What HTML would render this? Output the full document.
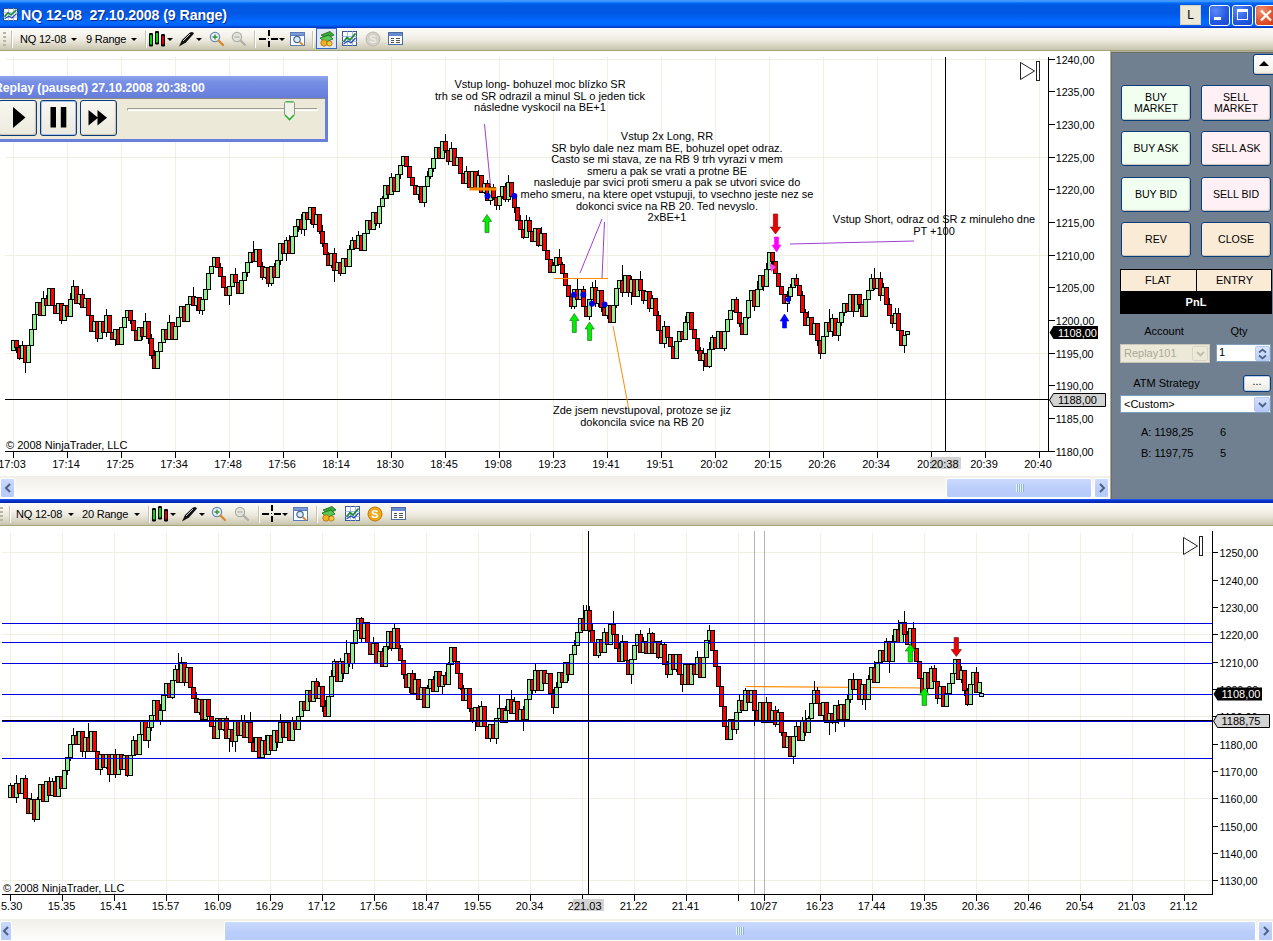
<!DOCTYPE html><html><head><meta charset="utf-8"><title>NQ 12-08</title><style>

html,body{margin:0;padding:0;background:#fff;}
body{width:1273px;height:941px;position:relative;overflow:hidden;font-family:"Liberation Sans",sans-serif;font-size:11px;color:#000;}
.abs{position:absolute;}
#title{left:0;top:0;width:1273px;height:28px;background:linear-gradient(#409aff 0%,#3b94ff 6%,#006dfb 10%,#0059e2 18%,#0058e4 50%,#0062f6 65%,#006aff 76%,#0067fd 89%,#0050e2 94%,#002ec2 100%);}
#title .t{left:21px;top:6.5px;color:#fff;font-weight:bold;font-size:14.2px;letter-spacing:-0.1px;white-space:pre;text-shadow:1px 1px 0 #0a2a8a;}
.tb{left:0;width:1273px;height:22px;background:linear-gradient(#fcfbf7 0%,#f4f2ea 35%,#e9e6da 60%,#d4d1bd 85%,#c6c4ab 100%);border-bottom:1px solid #a5a57d;}
.tb span{position:absolute;white-space:pre;font-size:11px;top:5px;letter-spacing:-0.2px;}
.sep{position:absolute;width:1px;top:3px;height:17px;background:#c5c2b2;border-right:1px solid #fff;}
.dd{position:absolute;top:10px;width:0;height:0;border-left:3px solid transparent;border-right:3px solid transparent;border-top:3px solid #000;}
#panel{left:1110px;top:51px;width:163px;height:448px;border-left:1px solid #b0ae9a;border-top:1px solid #b0ae9a;box-shadow:inset 1px 1px 0 #6e6e64;box-sizing:border-box;background:#708090;}
.btn{position:absolute;border:1px solid #0a3c7a;border-radius:3px;box-sizing:border-box;text-align:center;font-size:10.6px;line-height:11px;box-shadow:inset -1px -1px 1px #c8c4b8;}
.lbl{position:absolute;white-space:pre;font-size:11px;}
.sb{left:0;height:22px;background:linear-gradient(#f1efe8,#fefefc);}
.sbt{position:absolute;top:2px;height:20px;border-radius:2px;background:linear-gradient(#cbdafd,#bccffb 50%,#b7cbf9);border:1px solid #fff;box-sizing:border-box;}

</style></head><body>
<div class="abs" id="title">
<svg class="abs" style="left:3px;top:8px" width="15" height="13" viewBox="0 0 15 15" preserveAspectRatio="none"><rect x="0.5" y="0.5" width="14" height="14" fill="#fff" stroke="#24448a"/><path d="M0.5 5.5H14.5M0.5 10.5H14.5M5.5 0.5V14.5M10.5 0.5V14.5" stroke="#a8c0e8"/><path d="M1.5 10L5 5.5L8 8L13.5 2" stroke="#1a8a3a" stroke-width="1.8" fill="none"/><path d="M1.5 12.5L6 9.5L9 11.5L13.5 6.5" stroke="#2a4ab8" stroke-width="1.2" fill="none"/></svg>
<div class="abs t">NQ 12-08  27.10.2008 (9 Range)</div>
<div class="abs" style="left:1180px;top:5px;width:21px;height:20px;background:#ece9d8;border:1px solid #d8d2bd;box-sizing:border-box;text-align:center;font-size:12px;line-height:18px">L</div>
<div class="abs" style="left:1209px;top:5px;width:21px;height:21px;border:1px solid #fff;border-radius:3px;box-sizing:border-box;background:radial-gradient(circle at 30% 25%,#5a8af8,#2456e0 60%,#1a48c8)"></div>
<div class="abs" style="left:1232px;top:5px;width:21px;height:21px;border:1px solid #fff;border-radius:3px;box-sizing:border-box;background:radial-gradient(circle at 30% 25%,#5a8af8,#2456e0 60%,#1a48c8)"></div>
<div class="abs" style="left:1255px;top:5px;width:21px;height:21px;border:1px solid #fff;border-radius:3px;box-sizing:border-box;background:radial-gradient(circle at 30% 25%,#f09070,#e0502a 60%,#c83a18)"></div>
<div class="abs" style="left:1214px;top:17px;width:7px;height:3px;background:#fff"></div>
<div class="abs" style="left:1237px;top:9px;width:11px;height:11px;border:1px solid #fff;border-top:3px solid #fff;box-sizing:border-box"></div>
<svg class="abs" style="left:1259px;top:9px" width="14" height="13"><path d="M2 1.5L12 11.5M12 1.5L2 11.5" stroke="#fff" stroke-width="2.2"/></svg>
</div>
<div class="abs tb" style="top:28px">
<div class="abs" style="left:3px;top:4px;width:3px;height:15px;background:repeating-linear-gradient(#b8b5a2 0 2px,transparent 2px 4px)"></div>
<div class="sep" style="left:11px"></div>
<span style="left:20px">NQ 12-08</span><div class="dd" style="left:71px"></div>
<span style="left:86px">9 Range</span><div class="dd" style="left:131px"></div>
<div class="sep" style="left:145px"></div>
<svg class="abs" style="left:148px;top:1px" width="22" height="20" viewBox="0 0 22 20">
<rect x="1" y="4" width="4" height="13.5" rx="1.3" fill="#000"/><rect x="2.1" y="6" width="1.8" height="9.5" fill="#00f000"/>
<rect x="7" y="2" width="4" height="13.5" rx="1.3" fill="#000"/><rect x="8.1" y="4" width="1.8" height="9.5" fill="#00f000"/>
<rect x="13" y="5" width="4" height="12.5" rx="1.3" fill="#000"/><rect x="14.1" y="7" width="1.8" height="8.5" fill="#f00000"/></svg>
<div class="dd" style="left:167px"></div>
<svg class="abs" style="left:178px;top:2px" width="18" height="18" viewBox="0 0 18 18">
<path d="M1 16.5L4 10L12 2.5Q15 1 16 3.5L8 12.5Z" fill="#111"/><path d="M5 11L12 4" stroke="#fff" stroke-width="0.8"/></svg>
<div class="dd" style="left:196px"></div>
<svg class="abs" style="left:209px;top:3px" width="16" height="16" viewBox="0 0 16 16">
<circle cx="6" cy="6" r="4.6" fill="#e8f4ff" stroke="#6a8ab0" stroke-width="1.3"/><path d="M3.5 6H8.5M6 3.5V8.5" stroke="#3a8a2a" stroke-width="1.4"/>
<path d="M9.5 9.5L14 14" stroke="#d88a30" stroke-width="2.4" stroke-linecap="round"/></svg>
<svg class="abs" style="left:231px;top:3px" width="16" height="16" viewBox="0 0 16 16">
<circle cx="6" cy="6" r="4.6" fill="#e4e4dc" stroke="#b0b0a8" stroke-width="1.3"/><path d="M3.5 6H8.5" stroke="#b8b8b0" stroke-width="1.4"/>
<path d="M9.5 9.5L14 14" stroke="#b0b0a8" stroke-width="2.4" stroke-linecap="round"/></svg>
<div class="sep" style="left:254px"></div>
<svg class="abs" style="left:259px;top:1px" width="20" height="20" viewBox="0 0 20 20" shape-rendering="crispEdges">
<path d="M0 9.5H7M12 9.5H19M9.5 1V7M9.5 12V18" stroke="#000" stroke-width="2"/><rect x="9" y="9" width="1" height="1" fill="#000"/></svg>
<div class="dd" style="left:279px"></div>
<svg class="abs" style="left:290px;top:3px" width="16" height="16" viewBox="0 0 16 16">
<rect x="0.5" y="1.5" width="14" height="13" fill="#fff" stroke="#5a7ab8"/><rect x="0.5" y="1.5" width="14" height="3" fill="#7a9ad8" stroke="#5a7ab8"/>
<circle cx="7" cy="8.5" r="3.2" fill="#dcecff" stroke="#4a6a98" stroke-width="1.2"/><path d="M9.5 11L13 14" stroke="#d88a30" stroke-width="2"/></svg>
<div class="sep" style="left:312px"></div>
<div class="abs" style="left:316px;top:0px;width:21px;height:21px;border:1px solid #316ac5;background:#e1e6f2;box-sizing:border-box"></div>
<svg class="abs" style="left:318px;top:2px" width="18" height="18" viewBox="0 0 18 18">
<path d="M3 5L12 1.5L16 5L8 9Z" fill="#3aa83a" stroke="#1a6a1a" stroke-width="0.8"/>
<path d="M2 8L11 5L15 9L7 12.5Z" fill="#58c858" stroke="#1a6a1a" stroke-width="0.8"/>
<circle cx="6" cy="13" r="3.2" fill="#f0b020" stroke="#a87010" stroke-width="0.8"/><circle cx="11.5" cy="13.5" r="2.6" fill="#f8c840" stroke="#a87010" stroke-width="0.8"/></svg>
<svg class="abs" style="left:342px;top:3px" width="16" height="16" viewBox="0 0 16 16">
<rect x="0.5" y="0.5" width="14" height="14" fill="#fff" stroke="#3a5a98"/>
<path d="M0.5 5.5H14.5M0.5 10.5H14.5M5.5 0.5V14.5M10.5 0.5V14.5" stroke="#a8c0e8" stroke-width="1"/>
<path d="M1.5 11L5 6.5L8 9L13.5 2.5" stroke="#1a8a3a" stroke-width="1.8" fill="none"/>
<path d="M1.5 13L6 10L9 12L13.5 7" stroke="#2a4ab8" stroke-width="1.2" fill="none"/></svg>
<svg class="abs" style="left:365px;top:3px" width="16" height="16" viewBox="0 0 16 16">
<circle cx="8" cy="8" r="7" fill="#d4d2c8" stroke="#bcbab0"/><text x="8" y="12" text-anchor="middle" font-family='"Liberation Sans", sans-serif' font-weight="bold" font-size="11" fill="#ecebe4">S</text></svg>
<svg class="abs" style="left:388px;top:3px" width="16" height="16" viewBox="0 0 16 16" shape-rendering="crispEdges">
<rect x="0.5" y="1.5" width="14" height="12" fill="#fff" stroke="#4a6aa8"/><rect x="1" y="2" width="13" height="3" fill="#6a8ad0"/>
<path d="M3 7.5H6M8 7.5H12M3 9.5H6M8 9.5H12M3 11.5H6M8 11.5H12" stroke="#555"/></svg>
</div>
<svg class="abs" style="left:0;top:51px" width="1110" height="427" viewBox="0 51 1110 427" shape-rendering="crispEdges">
<path d="M13.5 57V452M67.5 57V452M121.5 57V452M175.5 57V452M229.5 57V452M283.5 57V452M337.5 57V452M391.5 57V452M445.5 57V452M499.5 57V452M553.5 57V452M607.5 57V452M661.5 57V452M715.5 57V452M769.5 57V452M823.5 57V452M877.5 57V452M931.5 57V452M985.5 57V452M1039.5 57V452M5 59.5H1048M5 157.5H1048M5 255.5H1048M5 353.5H1048" stroke="#f1eee2" fill="none"/>
<path d="M5 399.5H1049" stroke="#000"/>
<path d="M945.5 57V452" stroke="#000"/>
<path d="M5 451.5H1049M1048.5 57V452" stroke="#000"/>
<path d="M13.5 452V458M67.5 452V458M121.5 452V458M175.5 452V458M229.5 452V458M283.5 452V458M337.5 452V458M391.5 452V458M445.5 452V458M499.5 452V458M553.5 452V458M607.5 452V458M661.5 452V458M715.5 452V458M769.5 452V458M823.5 452V458M877.5 452V458M931.5 452V458M985.5 452V458M1039.5 452V458M1049 59.5H1055M1049 91.5H1055M1049 124.5H1055M1049 157.5H1055M1049 189.5H1055M1049 222.5H1055M1049 255.5H1055M1049 287.5H1055M1049 320.5H1055M1049 353.5H1055M1049 385.5H1055M1049 418.5H1055M1049 451.5H1055" stroke="#000"/>
<rect x="11.5" y="340.5" width="4" height="10" fill="#90ee90" stroke="#000"/>
<path d="M16.5 340V353" stroke="#000"/>
<rect x="14.5" y="340.5" width="4" height="7" fill="#ff0000" stroke="#000"/>
<path d="M19.5 345V360" stroke="#000"/>
<rect x="17.5" y="347.5" width="4" height="11" fill="#ff0000" stroke="#000"/>
<path d="M22.5 341V358" stroke="#000"/>
<rect x="20.5" y="345.5" width="4" height="13" fill="#90ee90" stroke="#000"/>
<path d="M25.5 345V373" stroke="#000"/>
<rect x="23.5" y="345.5" width="4" height="17" fill="#ff0000" stroke="#000"/>
<rect x="26.5" y="345.5" width="4" height="17" fill="#90ee90" stroke="#000"/>
<rect x="29.5" y="329.5" width="4" height="16" fill="#90ee90" stroke="#000"/>
<rect x="32.5" y="314.5" width="4" height="15" fill="#90ee90" stroke="#000"/>
<rect x="35.5" y="302.5" width="4" height="12" fill="#90ee90" stroke="#000"/>
<rect x="38.5" y="302.5" width="4" height="13" fill="#ff0000" stroke="#000"/>
<path d="M43.5 291V315" stroke="#000"/>
<rect x="41.5" y="298.5" width="4" height="17" fill="#90ee90" stroke="#000"/>
<path d="M46.5 295V305" stroke="#000"/>
<rect x="44.5" y="298.5" width="4" height="7" fill="#ff0000" stroke="#000"/>
<rect x="47.5" y="288.5" width="4" height="17" fill="#90ee90" stroke="#000"/>
<rect x="50.5" y="288.5" width="4" height="17" fill="#ff0000" stroke="#000"/>
<rect x="53.5" y="305.5" width="4" height="8" fill="#ff0000" stroke="#000"/>
<rect x="56.5" y="303.5" width="4" height="10" fill="#90ee90" stroke="#000"/>
<path d="M61.5 303V324" stroke="#000"/>
<rect x="59.5" y="303.5" width="4" height="17" fill="#ff0000" stroke="#000"/>
<rect x="62.5" y="305.5" width="4" height="15" fill="#90ee90" stroke="#000"/>
<rect x="65.5" y="305.5" width="4" height="11" fill="#ff0000" stroke="#000"/>
<path d="M70.5 293V316" stroke="#000"/>
<rect x="68.5" y="299.5" width="4" height="17" fill="#90ee90" stroke="#000"/>
<path d="M73.5 280V299" stroke="#000"/>
<rect x="71.5" y="286.5" width="4" height="13" fill="#90ee90" stroke="#000"/>
<rect x="74.5" y="286.5" width="4" height="17" fill="#ff0000" stroke="#000"/>
<path d="M79.5 294V305" stroke="#000"/>
<rect x="77.5" y="294.5" width="4" height="9" fill="#90ee90" stroke="#000"/>
<path d="M82.5 289V307" stroke="#000"/>
<rect x="80.5" y="294.5" width="4" height="13" fill="#ff0000" stroke="#000"/>
<rect x="83.5" y="298.5" width="4" height="9" fill="#90ee90" stroke="#000"/>
<rect x="86.5" y="298.5" width="4" height="17" fill="#ff0000" stroke="#000"/>
<rect x="89.5" y="315.5" width="4" height="16" fill="#ff0000" stroke="#000"/>
<rect x="92.5" y="321.5" width="4" height="10" fill="#90ee90" stroke="#000"/>
<path d="M97.5 321V342" stroke="#000"/>
<rect x="95.5" y="321.5" width="4" height="17" fill="#ff0000" stroke="#000"/>
<rect x="98.5" y="321.5" width="4" height="17" fill="#90ee90" stroke="#000"/>
<rect x="101.5" y="321.5" width="4" height="11" fill="#ff0000" stroke="#000"/>
<path d="M106.5 309V337" stroke="#000"/>
<rect x="104.5" y="315.5" width="4" height="17" fill="#90ee90" stroke="#000"/>
<rect x="107.5" y="315.5" width="4" height="17" fill="#ff0000" stroke="#000"/>
<rect x="110.5" y="332.5" width="4" height="7" fill="#ff0000" stroke="#000"/>
<path d="M115.5 329V346" stroke="#000"/>
<rect x="113.5" y="329.5" width="4" height="10" fill="#90ee90" stroke="#000"/>
<rect x="116.5" y="329.5" width="4" height="15" fill="#ff0000" stroke="#000"/>
<rect x="119.5" y="327.5" width="4" height="17" fill="#90ee90" stroke="#000"/>
<rect x="122.5" y="317.5" width="4" height="10" fill="#90ee90" stroke="#000"/>
<rect x="125.5" y="310.5" width="4" height="7" fill="#90ee90" stroke="#000"/>
<path d="M130.5 310V324" stroke="#000"/>
<rect x="128.5" y="310.5" width="4" height="10" fill="#ff0000" stroke="#000"/>
<rect x="131.5" y="320.5" width="4" height="10" fill="#ff0000" stroke="#000"/>
<rect x="134.5" y="330.5" width="4" height="10" fill="#ff0000" stroke="#000"/>
<rect x="137.5" y="327.5" width="4" height="13" fill="#90ee90" stroke="#000"/>
<path d="M142.5 327V340" stroke="#000"/>
<rect x="140.5" y="327.5" width="4" height="9" fill="#ff0000" stroke="#000"/>
<path d="M145.5 313V336" stroke="#000"/>
<rect x="143.5" y="321.5" width="4" height="15" fill="#90ee90" stroke="#000"/>
<path d="M148.5 321V344" stroke="#000"/>
<rect x="146.5" y="321.5" width="4" height="17" fill="#ff0000" stroke="#000"/>
<path d="M151.5 334V359" stroke="#000"/>
<rect x="149.5" y="338.5" width="4" height="17" fill="#ff0000" stroke="#000"/>
<path d="M154.5 350V368" stroke="#000"/>
<rect x="152.5" y="355.5" width="4" height="13" fill="#ff0000" stroke="#000"/>
<path d="M157.5 351V369" stroke="#000"/>
<rect x="155.5" y="351.5" width="4" height="17" fill="#90ee90" stroke="#000"/>
<rect x="158.5" y="342.5" width="4" height="9" fill="#90ee90" stroke="#000"/>
<rect x="161.5" y="329.5" width="4" height="13" fill="#90ee90" stroke="#000"/>
<rect x="164.5" y="329.5" width="4" height="10" fill="#ff0000" stroke="#000"/>
<path d="M169.5 315V339" stroke="#000"/>
<rect x="167.5" y="322.5" width="4" height="17" fill="#90ee90" stroke="#000"/>
<rect x="170.5" y="322.5" width="4" height="17" fill="#ff0000" stroke="#000"/>
<rect x="173.5" y="326.5" width="4" height="13" fill="#90ee90" stroke="#000"/>
<rect x="176.5" y="317.5" width="4" height="9" fill="#90ee90" stroke="#000"/>
<rect x="179.5" y="306.5" width="4" height="11" fill="#90ee90" stroke="#000"/>
<rect x="182.5" y="306.5" width="4" height="15" fill="#ff0000" stroke="#000"/>
<rect x="185.5" y="304.5" width="4" height="17" fill="#90ee90" stroke="#000"/>
<rect x="188.5" y="296.5" width="4" height="8" fill="#90ee90" stroke="#000"/>
<path d="M193.5 287V305" stroke="#000"/>
<rect x="191.5" y="296.5" width="4" height="9" fill="#ff0000" stroke="#000"/>
<path d="M196.5 297V311" stroke="#000"/>
<rect x="194.5" y="297.5" width="4" height="8" fill="#90ee90" stroke="#000"/>
<path d="M199.5 297V314" stroke="#000"/>
<rect x="197.5" y="297.5" width="4" height="13" fill="#ff0000" stroke="#000"/>
<path d="M202.5 299V315" stroke="#000"/>
<rect x="200.5" y="299.5" width="4" height="11" fill="#90ee90" stroke="#000"/>
<rect x="203.5" y="289.5" width="4" height="10" fill="#90ee90" stroke="#000"/>
<rect x="206.5" y="273.5" width="4" height="16" fill="#90ee90" stroke="#000"/>
<rect x="209.5" y="266.5" width="4" height="7" fill="#90ee90" stroke="#000"/>
<rect x="212.5" y="257.5" width="4" height="9" fill="#90ee90" stroke="#000"/>
<rect x="215.5" y="257.5" width="4" height="10" fill="#ff0000" stroke="#000"/>
<path d="M220.5 263V276" stroke="#000"/>
<rect x="218.5" y="267.5" width="4" height="9" fill="#ff0000" stroke="#000"/>
<rect x="221.5" y="276.5" width="4" height="11" fill="#ff0000" stroke="#000"/>
<rect x="224.5" y="287.5" width="4" height="8" fill="#ff0000" stroke="#000"/>
<path d="M229.5 286V305" stroke="#000"/>
<rect x="227.5" y="286.5" width="4" height="9" fill="#90ee90" stroke="#000"/>
<rect x="230.5" y="274.5" width="4" height="12" fill="#90ee90" stroke="#000"/>
<path d="M235.5 268V282" stroke="#000"/>
<rect x="233.5" y="274.5" width="4" height="8" fill="#ff0000" stroke="#000"/>
<rect x="236.5" y="282.5" width="4" height="11" fill="#ff0000" stroke="#000"/>
<rect x="239.5" y="280.5" width="4" height="13" fill="#90ee90" stroke="#000"/>
<rect x="242.5" y="272.5" width="4" height="8" fill="#90ee90" stroke="#000"/>
<path d="M247.5 262V277" stroke="#000"/>
<rect x="245.5" y="262.5" width="4" height="10" fill="#90ee90" stroke="#000"/>
<rect x="248.5" y="252.5" width="4" height="10" fill="#90ee90" stroke="#000"/>
<path d="M253.5 241V261" stroke="#000"/>
<rect x="251.5" y="252.5" width="4" height="9" fill="#ff0000" stroke="#000"/>
<rect x="254.5" y="249.5" width="4" height="12" fill="#90ee90" stroke="#000"/>
<rect x="257.5" y="249.5" width="4" height="17" fill="#ff0000" stroke="#000"/>
<path d="M262.5 262V280" stroke="#000"/>
<rect x="260.5" y="266.5" width="4" height="11" fill="#ff0000" stroke="#000"/>
<path d="M265.5 267V279" stroke="#000"/>
<rect x="263.5" y="267.5" width="4" height="10" fill="#90ee90" stroke="#000"/>
<path d="M268.5 267V287" stroke="#000"/>
<rect x="266.5" y="267.5" width="4" height="16" fill="#ff0000" stroke="#000"/>
<path d="M271.5 266V286" stroke="#000"/>
<rect x="269.5" y="266.5" width="4" height="17" fill="#90ee90" stroke="#000"/>
<path d="M274.5 263V277" stroke="#000"/>
<rect x="272.5" y="266.5" width="4" height="11" fill="#ff0000" stroke="#000"/>
<rect x="275.5" y="260.5" width="4" height="17" fill="#90ee90" stroke="#000"/>
<path d="M280.5 243V265" stroke="#000"/>
<rect x="278.5" y="243.5" width="4" height="17" fill="#90ee90" stroke="#000"/>
<rect x="281.5" y="243.5" width="4" height="10" fill="#ff0000" stroke="#000"/>
<path d="M286.5 237V261" stroke="#000"/>
<rect x="284.5" y="240.5" width="4" height="13" fill="#90ee90" stroke="#000"/>
<path d="M289.5 235V253" stroke="#000"/>
<rect x="287.5" y="240.5" width="4" height="13" fill="#ff0000" stroke="#000"/>
<rect x="290.5" y="236.5" width="4" height="17" fill="#90ee90" stroke="#000"/>
<rect x="293.5" y="226.5" width="4" height="10" fill="#90ee90" stroke="#000"/>
<path d="M298.5 219V232" stroke="#000"/>
<rect x="296.5" y="219.5" width="4" height="7" fill="#90ee90" stroke="#000"/>
<path d="M301.5 214V234" stroke="#000"/>
<rect x="299.5" y="219.5" width="4" height="10" fill="#ff0000" stroke="#000"/>
<path d="M304.5 212V236" stroke="#000"/>
<rect x="302.5" y="212.5" width="4" height="17" fill="#90ee90" stroke="#000"/>
<rect x="305.5" y="212.5" width="4" height="7" fill="#ff0000" stroke="#000"/>
<path d="M310.5 207V224" stroke="#000"/>
<rect x="308.5" y="207.5" width="4" height="12" fill="#90ee90" stroke="#000"/>
<path d="M313.5 207V228" stroke="#000"/>
<rect x="311.5" y="207.5" width="4" height="17" fill="#ff0000" stroke="#000"/>
<rect x="314.5" y="214.5" width="4" height="10" fill="#90ee90" stroke="#000"/>
<path d="M319.5 214V234" stroke="#000"/>
<rect x="317.5" y="214.5" width="4" height="17" fill="#ff0000" stroke="#000"/>
<path d="M322.5 225V247" stroke="#000"/>
<rect x="320.5" y="231.5" width="4" height="12" fill="#ff0000" stroke="#000"/>
<rect x="323.5" y="243.5" width="4" height="11" fill="#ff0000" stroke="#000"/>
<path d="M328.5 252V265" stroke="#000"/>
<rect x="326.5" y="254.5" width="4" height="11" fill="#ff0000" stroke="#000"/>
<path d="M331.5 253V268" stroke="#000"/>
<rect x="329.5" y="253.5" width="4" height="12" fill="#90ee90" stroke="#000"/>
<path d="M334.5 248V282" stroke="#000"/>
<rect x="332.5" y="253.5" width="4" height="17" fill="#ff0000" stroke="#000"/>
<rect x="335.5" y="262.5" width="4" height="8" fill="#90ee90" stroke="#000"/>
<path d="M340.5 262V276" stroke="#000"/>
<rect x="338.5" y="262.5" width="4" height="11" fill="#ff0000" stroke="#000"/>
<rect x="341.5" y="258.5" width="4" height="15" fill="#90ee90" stroke="#000"/>
<rect x="344.5" y="258.5" width="4" height="8" fill="#ff0000" stroke="#000"/>
<path d="M349.5 245V266" stroke="#000"/>
<rect x="347.5" y="249.5" width="4" height="17" fill="#90ee90" stroke="#000"/>
<path d="M352.5 237V249" stroke="#000"/>
<rect x="350.5" y="240.5" width="4" height="9" fill="#90ee90" stroke="#000"/>
<rect x="353.5" y="240.5" width="4" height="8" fill="#ff0000" stroke="#000"/>
<path d="M358.5 231V248" stroke="#000"/>
<rect x="356.5" y="235.5" width="4" height="13" fill="#90ee90" stroke="#000"/>
<rect x="359.5" y="235.5" width="4" height="15" fill="#ff0000" stroke="#000"/>
<rect x="362.5" y="233.5" width="4" height="17" fill="#90ee90" stroke="#000"/>
<rect x="365.5" y="220.5" width="4" height="13" fill="#90ee90" stroke="#000"/>
<rect x="368.5" y="220.5" width="4" height="9" fill="#ff0000" stroke="#000"/>
<rect x="371.5" y="212.5" width="4" height="17" fill="#90ee90" stroke="#000"/>
<path d="M376.5 212V226" stroke="#000"/>
<rect x="374.5" y="212.5" width="4" height="11" fill="#ff0000" stroke="#000"/>
<path d="M379.5 206V228" stroke="#000"/>
<rect x="377.5" y="206.5" width="4" height="17" fill="#90ee90" stroke="#000"/>
<path d="M382.5 196V206" stroke="#000"/>
<rect x="380.5" y="198.5" width="4" height="8" fill="#90ee90" stroke="#000"/>
<rect x="383.5" y="185.5" width="4" height="13" fill="#90ee90" stroke="#000"/>
<path d="M388.5 185V199" stroke="#000"/>
<rect x="386.5" y="185.5" width="4" height="9" fill="#ff0000" stroke="#000"/>
<path d="M391.5 173V194" stroke="#000"/>
<rect x="389.5" y="177.5" width="4" height="17" fill="#90ee90" stroke="#000"/>
<rect x="392.5" y="177.5" width="4" height="14" fill="#ff0000" stroke="#000"/>
<rect x="395.5" y="174.5" width="4" height="17" fill="#90ee90" stroke="#000"/>
<path d="M400.5 165V179" stroke="#000"/>
<rect x="398.5" y="165.5" width="4" height="9" fill="#90ee90" stroke="#000"/>
<rect x="401.5" y="156.5" width="4" height="9" fill="#90ee90" stroke="#000"/>
<rect x="404.5" y="156.5" width="4" height="10" fill="#ff0000" stroke="#000"/>
<rect x="407.5" y="166.5" width="4" height="11" fill="#ff0000" stroke="#000"/>
<rect x="410.5" y="177.5" width="4" height="8" fill="#ff0000" stroke="#000"/>
<rect x="413.5" y="185.5" width="4" height="9" fill="#ff0000" stroke="#000"/>
<path d="M418.5 186V200" stroke="#000"/>
<rect x="416.5" y="186.5" width="4" height="8" fill="#90ee90" stroke="#000"/>
<rect x="419.5" y="186.5" width="4" height="16" fill="#ff0000" stroke="#000"/>
<path d="M424.5 186V207" stroke="#000"/>
<rect x="422.5" y="186.5" width="4" height="16" fill="#90ee90" stroke="#000"/>
<path d="M427.5 171V186" stroke="#000"/>
<rect x="425.5" y="176.5" width="4" height="10" fill="#90ee90" stroke="#000"/>
<path d="M430.5 168V179" stroke="#000"/>
<rect x="428.5" y="168.5" width="4" height="8" fill="#90ee90" stroke="#000"/>
<path d="M433.5 158V172" stroke="#000"/>
<rect x="431.5" y="158.5" width="4" height="10" fill="#90ee90" stroke="#000"/>
<rect x="434.5" y="147.5" width="4" height="11" fill="#90ee90" stroke="#000"/>
<rect x="437.5" y="147.5" width="4" height="11" fill="#ff0000" stroke="#000"/>
<rect x="440.5" y="141.5" width="4" height="17" fill="#90ee90" stroke="#000"/>
<path d="M445.5 134V153" stroke="#000"/>
<rect x="443.5" y="141.5" width="4" height="9" fill="#ff0000" stroke="#000"/>
<path d="M448.5 150V165" stroke="#000"/>
<rect x="446.5" y="150.5" width="4" height="11" fill="#ff0000" stroke="#000"/>
<path d="M451.5 142V161" stroke="#000"/>
<rect x="449.5" y="148.5" width="4" height="13" fill="#90ee90" stroke="#000"/>
<rect x="452.5" y="148.5" width="4" height="17" fill="#ff0000" stroke="#000"/>
<rect x="455.5" y="157.5" width="4" height="8" fill="#90ee90" stroke="#000"/>
<rect x="458.5" y="157.5" width="4" height="16" fill="#ff0000" stroke="#000"/>
<rect x="461.5" y="173.5" width="4" height="10" fill="#ff0000" stroke="#000"/>
<path d="M466.5 166V183" stroke="#000"/>
<rect x="464.5" y="171.5" width="4" height="12" fill="#90ee90" stroke="#000"/>
<rect x="467.5" y="171.5" width="4" height="16" fill="#ff0000" stroke="#000"/>
<path d="M472.5 171V189" stroke="#000"/>
<rect x="470.5" y="171.5" width="4" height="16" fill="#90ee90" stroke="#000"/>
<rect x="473.5" y="171.5" width="4" height="17" fill="#ff0000" stroke="#000"/>
<path d="M478.5 170V188" stroke="#000"/>
<rect x="476.5" y="175.5" width="4" height="13" fill="#90ee90" stroke="#000"/>
<rect x="479.5" y="175.5" width="4" height="17" fill="#ff0000" stroke="#000"/>
<path d="M484.5 183V194" stroke="#000"/>
<rect x="482.5" y="183.5" width="4" height="9" fill="#90ee90" stroke="#000"/>
<path d="M487.5 180V200" stroke="#000"/>
<rect x="485.5" y="183.5" width="4" height="17" fill="#ff0000" stroke="#000"/>
<path d="M490.5 184V205" stroke="#000"/>
<rect x="488.5" y="187.5" width="4" height="13" fill="#90ee90" stroke="#000"/>
<path d="M493.5 184V200" stroke="#000"/>
<rect x="491.5" y="187.5" width="4" height="10" fill="#ff0000" stroke="#000"/>
<path d="M496.5 197V210" stroke="#000"/>
<rect x="494.5" y="197.5" width="4" height="8" fill="#ff0000" stroke="#000"/>
<path d="M499.5 196V210" stroke="#000"/>
<rect x="497.5" y="196.5" width="4" height="9" fill="#90ee90" stroke="#000"/>
<path d="M502.5 186V199" stroke="#000"/>
<rect x="500.5" y="186.5" width="4" height="10" fill="#90ee90" stroke="#000"/>
<path d="M505.5 183V202" stroke="#000"/>
<rect x="503.5" y="186.5" width="4" height="13" fill="#ff0000" stroke="#000"/>
<path d="M508.5 175V202" stroke="#000"/>
<rect x="506.5" y="182.5" width="4" height="17" fill="#90ee90" stroke="#000"/>
<rect x="509.5" y="182.5" width="4" height="14" fill="#ff0000" stroke="#000"/>
<path d="M514.5 194V213" stroke="#000"/>
<rect x="512.5" y="196.5" width="4" height="11" fill="#ff0000" stroke="#000"/>
<rect x="515.5" y="207.5" width="4" height="13" fill="#ff0000" stroke="#000"/>
<path d="M520.5 215V229" stroke="#000"/>
<rect x="518.5" y="220.5" width="4" height="9" fill="#ff0000" stroke="#000"/>
<path d="M523.5 229V239" stroke="#000"/>
<rect x="521.5" y="229.5" width="4" height="8" fill="#ff0000" stroke="#000"/>
<path d="M526.5 215V237" stroke="#000"/>
<rect x="524.5" y="220.5" width="4" height="17" fill="#90ee90" stroke="#000"/>
<path d="M529.5 217V231" stroke="#000"/>
<rect x="527.5" y="220.5" width="4" height="11" fill="#ff0000" stroke="#000"/>
<rect x="530.5" y="231.5" width="4" height="10" fill="#ff0000" stroke="#000"/>
<rect x="533.5" y="228.5" width="4" height="13" fill="#90ee90" stroke="#000"/>
<path d="M538.5 228V247" stroke="#000"/>
<rect x="536.5" y="228.5" width="4" height="17" fill="#ff0000" stroke="#000"/>
<path d="M541.5 227V245" stroke="#000"/>
<rect x="539.5" y="233.5" width="4" height="12" fill="#90ee90" stroke="#000"/>
<rect x="542.5" y="233.5" width="4" height="17" fill="#ff0000" stroke="#000"/>
<rect x="545.5" y="250.5" width="4" height="9" fill="#ff0000" stroke="#000"/>
<rect x="548.5" y="259.5" width="4" height="13" fill="#ff0000" stroke="#000"/>
<path d="M553.5 262V272" stroke="#000"/>
<rect x="551.5" y="265.5" width="4" height="7" fill="#90ee90" stroke="#000"/>
<rect x="554.5" y="257.5" width="4" height="8" fill="#90ee90" stroke="#000"/>
<path d="M559.5 249V264" stroke="#000"/>
<rect x="557.5" y="257.5" width="4" height="7" fill="#ff0000" stroke="#000"/>
<path d="M562.5 262V273" stroke="#000"/>
<rect x="560.5" y="264.5" width="4" height="9" fill="#ff0000" stroke="#000"/>
<rect x="563.5" y="273.5" width="4" height="12" fill="#ff0000" stroke="#000"/>
<rect x="566.5" y="285.5" width="4" height="11" fill="#ff0000" stroke="#000"/>
<path d="M571.5 296V309" stroke="#000"/>
<rect x="569.5" y="296.5" width="4" height="10" fill="#ff0000" stroke="#000"/>
<path d="M574.5 289V309" stroke="#000"/>
<rect x="572.5" y="289.5" width="4" height="17" fill="#90ee90" stroke="#000"/>
<path d="M577.5 279V299" stroke="#000"/>
<rect x="575.5" y="289.5" width="4" height="10" fill="#ff0000" stroke="#000"/>
<rect x="578.5" y="289.5" width="4" height="10" fill="#90ee90" stroke="#000"/>
<path d="M583.5 286V306" stroke="#000"/>
<rect x="581.5" y="289.5" width="4" height="17" fill="#ff0000" stroke="#000"/>
<rect x="584.5" y="306.5" width="4" height="10" fill="#ff0000" stroke="#000"/>
<path d="M589.5 299V320" stroke="#000"/>
<rect x="587.5" y="299.5" width="4" height="17" fill="#90ee90" stroke="#000"/>
<path d="M592.5 282V299" stroke="#000"/>
<rect x="590.5" y="287.5" width="4" height="12" fill="#90ee90" stroke="#000"/>
<path d="M595.5 280V307" stroke="#000"/>
<rect x="593.5" y="287.5" width="4" height="16" fill="#ff0000" stroke="#000"/>
<path d="M598.5 290V307" stroke="#000"/>
<rect x="596.5" y="290.5" width="4" height="13" fill="#90ee90" stroke="#000"/>
<path d="M601.5 290V312" stroke="#000"/>
<rect x="599.5" y="290.5" width="4" height="17" fill="#ff0000" stroke="#000"/>
<rect x="602.5" y="307.5" width="4" height="8" fill="#ff0000" stroke="#000"/>
<path d="M607.5 305V319" stroke="#000"/>
<rect x="605.5" y="305.5" width="4" height="10" fill="#90ee90" stroke="#000"/>
<path d="M610.5 305V323" stroke="#000"/>
<rect x="608.5" y="305.5" width="4" height="17" fill="#ff0000" stroke="#000"/>
<rect x="611.5" y="305.5" width="4" height="17" fill="#90ee90" stroke="#000"/>
<path d="M616.5 288V308" stroke="#000"/>
<rect x="614.5" y="288.5" width="4" height="17" fill="#90ee90" stroke="#000"/>
<rect x="617.5" y="280.5" width="4" height="8" fill="#90ee90" stroke="#000"/>
<path d="M622.5 265V297" stroke="#000"/>
<rect x="620.5" y="280.5" width="4" height="12" fill="#ff0000" stroke="#000"/>
<rect x="623.5" y="275.5" width="4" height="17" fill="#90ee90" stroke="#000"/>
<path d="M628.5 275V297" stroke="#000"/>
<rect x="626.5" y="275.5" width="4" height="17" fill="#ff0000" stroke="#000"/>
<path d="M631.5 276V305" stroke="#000"/>
<rect x="629.5" y="279.5" width="4" height="13" fill="#90ee90" stroke="#000"/>
<rect x="632.5" y="279.5" width="4" height="17" fill="#ff0000" stroke="#000"/>
<rect x="635.5" y="279.5" width="4" height="17" fill="#90ee90" stroke="#000"/>
<path d="M640.5 271V290" stroke="#000"/>
<rect x="638.5" y="279.5" width="4" height="11" fill="#ff0000" stroke="#000"/>
<path d="M643.5 290V304" stroke="#000"/>
<rect x="641.5" y="290.5" width="4" height="10" fill="#ff0000" stroke="#000"/>
<rect x="644.5" y="291.5" width="4" height="9" fill="#90ee90" stroke="#000"/>
<path d="M649.5 291V312" stroke="#000"/>
<rect x="647.5" y="291.5" width="4" height="17" fill="#ff0000" stroke="#000"/>
<path d="M652.5 295V308" stroke="#000"/>
<rect x="650.5" y="298.5" width="4" height="10" fill="#90ee90" stroke="#000"/>
<rect x="653.5" y="298.5" width="4" height="17" fill="#ff0000" stroke="#000"/>
<path d="M658.5 311V330" stroke="#000"/>
<rect x="656.5" y="315.5" width="4" height="15" fill="#ff0000" stroke="#000"/>
<rect x="659.5" y="330.5" width="4" height="13" fill="#ff0000" stroke="#000"/>
<path d="M664.5 321V348" stroke="#000"/>
<rect x="662.5" y="326.5" width="4" height="17" fill="#90ee90" stroke="#000"/>
<rect x="665.5" y="326.5" width="4" height="11" fill="#ff0000" stroke="#000"/>
<rect x="668.5" y="337.5" width="4" height="9" fill="#ff0000" stroke="#000"/>
<path d="M673.5 346V359" stroke="#000"/>
<rect x="671.5" y="346.5" width="4" height="12" fill="#ff0000" stroke="#000"/>
<rect x="674.5" y="341.5" width="4" height="17" fill="#90ee90" stroke="#000"/>
<rect x="677.5" y="331.5" width="4" height="10" fill="#90ee90" stroke="#000"/>
<rect x="680.5" y="331.5" width="4" height="8" fill="#ff0000" stroke="#000"/>
<path d="M685.5 316V339" stroke="#000"/>
<rect x="683.5" y="322.5" width="4" height="17" fill="#90ee90" stroke="#000"/>
<rect x="686.5" y="312.5" width="4" height="10" fill="#90ee90" stroke="#000"/>
<rect x="689.5" y="312.5" width="4" height="17" fill="#ff0000" stroke="#000"/>
<rect x="692.5" y="329.5" width="4" height="9" fill="#ff0000" stroke="#000"/>
<path d="M697.5 338V354" stroke="#000"/>
<rect x="695.5" y="338.5" width="4" height="12" fill="#ff0000" stroke="#000"/>
<path d="M700.5 347V360" stroke="#000"/>
<rect x="698.5" y="350.5" width="4" height="10" fill="#ff0000" stroke="#000"/>
<path d="M703.5 348V371" stroke="#000"/>
<rect x="701.5" y="353.5" width="4" height="7" fill="#90ee90" stroke="#000"/>
<rect x="704.5" y="353.5" width="4" height="13" fill="#ff0000" stroke="#000"/>
<path d="M709.5 342V368" stroke="#000"/>
<rect x="707.5" y="349.5" width="4" height="17" fill="#90ee90" stroke="#000"/>
<path d="M712.5 335V349" stroke="#000"/>
<rect x="710.5" y="337.5" width="4" height="12" fill="#90ee90" stroke="#000"/>
<rect x="713.5" y="337.5" width="4" height="11" fill="#ff0000" stroke="#000"/>
<rect x="716.5" y="331.5" width="4" height="17" fill="#90ee90" stroke="#000"/>
<rect x="719.5" y="331.5" width="4" height="17" fill="#ff0000" stroke="#000"/>
<path d="M724.5 331V351" stroke="#000"/>
<rect x="722.5" y="331.5" width="4" height="17" fill="#90ee90" stroke="#000"/>
<rect x="725.5" y="319.5" width="4" height="12" fill="#90ee90" stroke="#000"/>
<rect x="728.5" y="310.5" width="4" height="9" fill="#90ee90" stroke="#000"/>
<path d="M733.5 299V312" stroke="#000"/>
<rect x="731.5" y="299.5" width="4" height="11" fill="#90ee90" stroke="#000"/>
<path d="M736.5 297V312" stroke="#000"/>
<rect x="734.5" y="299.5" width="4" height="13" fill="#ff0000" stroke="#000"/>
<path d="M739.5 312V327" stroke="#000"/>
<rect x="737.5" y="312.5" width="4" height="11" fill="#ff0000" stroke="#000"/>
<rect x="740.5" y="323.5" width="4" height="11" fill="#ff0000" stroke="#000"/>
<rect x="743.5" y="317.5" width="4" height="17" fill="#90ee90" stroke="#000"/>
<path d="M748.5 300V319" stroke="#000"/>
<rect x="746.5" y="300.5" width="4" height="17" fill="#90ee90" stroke="#000"/>
<rect x="749.5" y="290.5" width="4" height="10" fill="#90ee90" stroke="#000"/>
<path d="M754.5 290V311" stroke="#000"/>
<rect x="752.5" y="290.5" width="4" height="16" fill="#ff0000" stroke="#000"/>
<path d="M757.5 281V306" stroke="#000"/>
<rect x="755.5" y="289.5" width="4" height="17" fill="#90ee90" stroke="#000"/>
<rect x="758.5" y="275.5" width="4" height="14" fill="#90ee90" stroke="#000"/>
<path d="M763.5 275V291" stroke="#000"/>
<rect x="761.5" y="275.5" width="4" height="11" fill="#ff0000" stroke="#000"/>
<path d="M766.5 263V286" stroke="#000"/>
<rect x="764.5" y="269.5" width="4" height="17" fill="#90ee90" stroke="#000"/>
<rect x="767.5" y="252.5" width="4" height="17" fill="#90ee90" stroke="#000"/>
<path d="M772.5 252V266" stroke="#000"/>
<rect x="770.5" y="252.5" width="4" height="9" fill="#ff0000" stroke="#000"/>
<rect x="773.5" y="261.5" width="4" height="12" fill="#ff0000" stroke="#000"/>
<rect x="776.5" y="273.5" width="4" height="13" fill="#ff0000" stroke="#000"/>
<rect x="779.5" y="286.5" width="4" height="8" fill="#ff0000" stroke="#000"/>
<rect x="782.5" y="294.5" width="4" height="9" fill="#ff0000" stroke="#000"/>
<path d="M787.5 291V312" stroke="#000"/>
<rect x="785.5" y="296.5" width="4" height="7" fill="#90ee90" stroke="#000"/>
<path d="M790.5 284V301" stroke="#000"/>
<rect x="788.5" y="287.5" width="4" height="9" fill="#90ee90" stroke="#000"/>
<rect x="791.5" y="278.5" width="4" height="9" fill="#90ee90" stroke="#000"/>
<path d="M796.5 274V285" stroke="#000"/>
<rect x="794.5" y="278.5" width="4" height="7" fill="#ff0000" stroke="#000"/>
<rect x="797.5" y="285.5" width="4" height="10" fill="#ff0000" stroke="#000"/>
<path d="M802.5 291V312" stroke="#000"/>
<rect x="800.5" y="295.5" width="4" height="17" fill="#ff0000" stroke="#000"/>
<path d="M805.5 309V325" stroke="#000"/>
<rect x="803.5" y="312.5" width="4" height="13" fill="#ff0000" stroke="#000"/>
<path d="M808.5 311V325" stroke="#000"/>
<rect x="806.5" y="317.5" width="4" height="8" fill="#90ee90" stroke="#000"/>
<rect x="809.5" y="317.5" width="4" height="17" fill="#ff0000" stroke="#000"/>
<rect x="812.5" y="323.5" width="4" height="11" fill="#90ee90" stroke="#000"/>
<path d="M817.5 323V346" stroke="#000"/>
<rect x="815.5" y="323.5" width="4" height="17" fill="#ff0000" stroke="#000"/>
<path d="M820.5 340V359" stroke="#000"/>
<rect x="818.5" y="340.5" width="4" height="13" fill="#ff0000" stroke="#000"/>
<rect x="821.5" y="336.5" width="4" height="17" fill="#90ee90" stroke="#000"/>
<rect x="824.5" y="322.5" width="4" height="14" fill="#90ee90" stroke="#000"/>
<path d="M829.5 309V331" stroke="#000"/>
<rect x="827.5" y="322.5" width="4" height="9" fill="#ff0000" stroke="#000"/>
<path d="M832.5 314V337" stroke="#000"/>
<rect x="830.5" y="318.5" width="4" height="13" fill="#90ee90" stroke="#000"/>
<rect x="833.5" y="318.5" width="4" height="17" fill="#ff0000" stroke="#000"/>
<path d="M838.5 322V341" stroke="#000"/>
<rect x="836.5" y="322.5" width="4" height="13" fill="#90ee90" stroke="#000"/>
<path d="M841.5 312V326" stroke="#000"/>
<rect x="839.5" y="312.5" width="4" height="10" fill="#90ee90" stroke="#000"/>
<path d="M844.5 303V316" stroke="#000"/>
<rect x="842.5" y="303.5" width="4" height="9" fill="#90ee90" stroke="#000"/>
<rect x="845.5" y="303.5" width="4" height="8" fill="#ff0000" stroke="#000"/>
<rect x="848.5" y="294.5" width="4" height="17" fill="#90ee90" stroke="#000"/>
<path d="M853.5 294V317" stroke="#000"/>
<rect x="851.5" y="294.5" width="4" height="17" fill="#ff0000" stroke="#000"/>
<rect x="854.5" y="294.5" width="4" height="17" fill="#90ee90" stroke="#000"/>
<path d="M859.5 294V309" stroke="#000"/>
<rect x="857.5" y="294.5" width="4" height="10" fill="#ff0000" stroke="#000"/>
<rect x="860.5" y="304.5" width="4" height="12" fill="#ff0000" stroke="#000"/>
<rect x="863.5" y="299.5" width="4" height="17" fill="#90ee90" stroke="#000"/>
<rect x="866.5" y="290.5" width="4" height="9" fill="#90ee90" stroke="#000"/>
<path d="M871.5 274V290" stroke="#000"/>
<rect x="869.5" y="278.5" width="4" height="12" fill="#90ee90" stroke="#000"/>
<path d="M874.5 268V290" stroke="#000"/>
<rect x="872.5" y="278.5" width="4" height="10" fill="#ff0000" stroke="#000"/>
<rect x="875.5" y="278.5" width="4" height="10" fill="#90ee90" stroke="#000"/>
<path d="M880.5 272V301" stroke="#000"/>
<rect x="878.5" y="278.5" width="4" height="17" fill="#ff0000" stroke="#000"/>
<path d="M883.5 283V295" stroke="#000"/>
<rect x="881.5" y="287.5" width="4" height="8" fill="#90ee90" stroke="#000"/>
<rect x="884.5" y="287.5" width="4" height="17" fill="#ff0000" stroke="#000"/>
<path d="M889.5 298V315" stroke="#000"/>
<rect x="887.5" y="304.5" width="4" height="11" fill="#ff0000" stroke="#000"/>
<path d="M892.5 315V328" stroke="#000"/>
<rect x="890.5" y="315.5" width="4" height="8" fill="#ff0000" stroke="#000"/>
<path d="M895.5 308V323" stroke="#000"/>
<rect x="893.5" y="313.5" width="4" height="10" fill="#90ee90" stroke="#000"/>
<path d="M898.5 308V330" stroke="#000"/>
<rect x="896.5" y="313.5" width="4" height="17" fill="#ff0000" stroke="#000"/>
<rect x="899.5" y="330.5" width="4" height="15" fill="#ff0000" stroke="#000"/>
<path d="M904.5 335V353" stroke="#000"/>
<rect x="902.5" y="335.5" width="4" height="10" fill="#90ee90" stroke="#000"/>
<g shape-rendering="auto" fill="none">
<path d="M484.5 124L490.5 186M580 273L602 219M602 278L604.5 222M790 244L914 241" stroke="#a040d0" stroke-width="1"/>
<path d="M613 326L628.6 408" stroke="#ff8c00" stroke-width="1"/>
<path d="M554 278.5H608" stroke="#ff8c00" stroke-width="1"/>
<path d="M469.5 189H496.5" stroke="#ff8c00" stroke-width="3"/>
</g>
<rect x="905.5" y="331.5" width="4" height="3" fill="#90ee90" stroke="#000"/>
<g shape-rendering="auto">
<circle cx="487.5" cy="196" r="3" fill="#0000e6"/>
<circle cx="514.3" cy="196" r="3" fill="#0000e6"/>
<circle cx="574" cy="294.7" r="3" fill="#0000e6"/>
<circle cx="583.3" cy="294.7" r="3" fill="#0000e6"/>
<circle cx="592" cy="303.7" r="3" fill="#0000e6"/>
<circle cx="604.5" cy="304.5" r="3" fill="#0000e6"/>
<path d="M487 214.5L491.6 221.5H489V232.5H485V221.5H482.4Z" fill="#00f000" stroke="#1a5a1a" stroke-width="0.6"/>
<path d="M574.3 313.5L578.9 320.5H576.3V332.5H572.3V320.5H569.6999999999999Z" fill="#00f000" stroke="#1a5a1a" stroke-width="0.6"/>
<path d="M589.6 322L594.2 329H591.6V340.5H587.6V329H585.0Z" fill="#00f000" stroke="#1a5a1a" stroke-width="0.6"/>
<path d="M775.5 234L780.7 227H777.7V214H773.3V227H770.3Z" fill="#ee0000" stroke="#5a1a1a" stroke-width="0.6"/>
<path d="M776.5 252L780.9 245H778.5V237H774.5V245H772.1Z" fill="#ff00ff" stroke="#ff00ff" stroke-width="0.6"/>
<path d="M769.5 262.5L776 267L771 272Z" fill="#ff40ff"/>
<path d="M784.5 314L788.9 321H786.5V328H782.5V321H780.1Z" fill="#0000ff" stroke="#0000ff" stroke-width="0.6"/>
<path d="M784 299.5L790 295.5V303.5Z" fill="#0000ff"/>
<path d="M1020.5 62.5V79.5L1034.5 71Z" fill="#fff" stroke="#222" stroke-width="1"/><rect x="1036.5" y="61.5" width="3" height="19" fill="#fff" stroke="#222"/>
</g>
<g font-family='"Liberation Sans", sans-serif' font-size="11" fill="#000" shape-rendering="auto">
<text x="1055.7" y="64" font-size="10.7">1240,00</text>
<text x="1055.7" y="96" font-size="10.7">1235,00</text>
<text x="1055.7" y="129" font-size="10.7">1230,00</text>
<text x="1055.7" y="162" font-size="10.7">1225,00</text>
<text x="1055.7" y="194" font-size="10.7">1220,00</text>
<text x="1055.7" y="227" font-size="10.7">1215,00</text>
<text x="1055.7" y="260" font-size="10.7">1210,00</text>
<text x="1055.7" y="292" font-size="10.7">1205,00</text>
<text x="1055.7" y="325" font-size="10.7">1200,00</text>
<text x="1055.7" y="358" font-size="10.7">1195,00</text>
<text x="1055.7" y="390" font-size="10.7">1190,00</text>
<text x="1055.7" y="423" font-size="10.7">1185,00</text>
<text x="1055.7" y="456" font-size="10.7">1180,00</text>
<g shape-rendering="auto"><path d="M1049.5 332.5L1053.5 326H1098V339H1053.5Z" fill="#000"/><path d="M1049.5 400L1053.5 393.5H1105.5V406.5H1053.5Z" fill="#d3d3d3" stroke="#000"/></g>
<text x="1058" y="336.5" fill="#fff">1108,00</text>
<text x="1058" y="404">1188,00</text>
<text x="12" y="467.5" text-anchor="middle">17:03</text>
<text x="66" y="467.5" text-anchor="middle">17:14</text>
<text x="120" y="467.5" text-anchor="middle">17:25</text>
<text x="174" y="467.5" text-anchor="middle">17:34</text>
<text x="228" y="467.5" text-anchor="middle">17:48</text>
<text x="282" y="467.5" text-anchor="middle">17:56</text>
<text x="336" y="467.5" text-anchor="middle">18:14</text>
<text x="390" y="467.5" text-anchor="middle">18:30</text>
<text x="444" y="467.5" text-anchor="middle">18:45</text>
<text x="498" y="467.5" text-anchor="middle">19:08</text>
<text x="552" y="467.5" text-anchor="middle">19:23</text>
<text x="606" y="467.5" text-anchor="middle">19:41</text>
<text x="660" y="467.5" text-anchor="middle">19:51</text>
<text x="714" y="467.5" text-anchor="middle">20:02</text>
<text x="768" y="467.5" text-anchor="middle">20:15</text>
<text x="822" y="467.5" text-anchor="middle">20:26</text>
<text x="876" y="467.5" text-anchor="middle">20:34</text>
<rect x="930" y="457" width="31" height="12" fill="#d3d3d3"/>
<text x="917" y="467.5">20:</text><text x="931" y="467.5">20:38</text>
<text x="984" y="467.5" text-anchor="middle">20:39</text>
<text x="1038" y="467.5" text-anchor="middle">20:40</text>
<text x="6" y="449">© 2008 NinjaTrader, LLC</text>
<text x="540" y="88.0" text-anchor="middle">Vstup long- bohuzel moc blízko SR</text>
<text x="540" y="99.5" text-anchor="middle">trh se od SR odrazil a minul SL o jeden tick</text>
<text x="540" y="111.0" text-anchor="middle">následne vyskocil na BE+1</text>
<text x="667" y="140.0" text-anchor="middle">Vstup 2x Long, RR</text>
<text x="667" y="151.6" text-anchor="middle">SR bylo dale nez mam BE, bohuzel opet odraz.</text>
<text x="667" y="163.2" text-anchor="middle">Casto se mi stava, ze na RB 9 trh vyrazi v mem</text>
<text x="667" y="174.8" text-anchor="middle">smeru a pak se vrati a protne BE</text>
<text x="667" y="186.4" text-anchor="middle">nasleduje par svici proti smeru a pak se utvori svice do</text>
<text x="667" y="198.0" text-anchor="middle">meho smeru, na ktere opet vstupuji, to vsechno jeste nez se</text>
<text x="667" y="209.6" text-anchor="middle">dokonci svice na RB 20. Ted nevyslo.</text>
<text x="667" y="221.2" text-anchor="middle">2xBE+1</text>
<text x="934" y="223.0" text-anchor="middle">Vstup Short, odraz od SR z minuleho dne</text>
<text x="934" y="234.8" text-anchor="middle">PT +100</text>
<text x="642" y="414.0" text-anchor="middle">Zde jsem nevstupoval, protoze se jiz</text>
<text x="642" y="425.8" text-anchor="middle">dokoncila svice na RB 20</text>
</g>
</svg>
<div class="abs" style="left:-3px;top:76px;width:331px;height:66px;background:#6a7fdc;box-sizing:border-box"></div>
<div class="abs" style="left:0;top:76px;width:328px;height:23px;background:linear-gradient(#8fa5ec 0%,#7890e4 25%,#6c84de 70%,#647cd8 100%)"></div>
<div class="abs" style="left:-6px;top:81px;color:#fff;font-weight:bold;font-size:12.2px;white-space:pre">Replay (paused) 27.10.2008 20:38:00</div>
<div class="abs" style="left:0;top:98px;width:325px;height:41px;background:#ece9d8;border-top:1px solid #8a8a80;box-sizing:border-box"></div>
<div class="btn" style="left:-2px;top:100px;width:39px;height:36px;background:linear-gradient(#f8f7f0,#eceade);"></div>
<div class="btn" style="left:40px;top:100px;width:37px;height:36px;background:linear-gradient(#f8f7f0,#eceade);box-shadow:inset 0 0 0 1px #a8c0f0;"></div>
<div class="btn" style="left:80px;top:100px;width:37px;height:36px;background:linear-gradient(#f8f7f0,#eceade);"></div>
<svg class="abs" style="left:0;top:100px" width="120" height="36"><path d="M13 7V28L25.5 17.5Z" fill="#000"/><rect x="50.5" y="7" width="5.5" height="20.5" fill="#000"/><rect x="60.8" y="7" width="5.5" height="20.5" fill="#000"/><path d="M88.5 10V25.5L98 17.7ZM97.5 10V25.5L107 17.7Z" fill="#000"/></svg>
<div class="abs" style="left:127px;top:108px;width:191px;height:3px;border-top:1px solid #9d9c91;border-left:1px solid #9d9c91;border-bottom:1px solid #fff;border-right:1px solid #fff;border-radius:2px;box-sizing:border-box;background:#f4f3ec"></div>
<svg class="abs" style="left:283px;top:100px" width="14" height="22"><path d="M1.5 3.5Q1.5 1.5 3.5 1.5H9.5Q11.5 1.5 11.5 3.5V14.5L6.5 19.5L1.5 14.5Z" fill="#f2f1ea" stroke="#8a9a8a"/><path d="M2 15L6.5 19.5L11 15" stroke="#30b030" stroke-width="1.6" fill="none"/><path d="M3 2H10" stroke="#40c040" stroke-width="1.2"/></svg>
<div class="abs" id="panel">
<div class="btn" style="left:10px;top:33px;width:70px;height:36px;background:#f0fff0;padding-top:6.0px">BUY<br>MARKET</div>
<div class="btn" style="left:90px;top:33px;width:70px;height:36px;background:#fff0f5;padding-top:6.0px">SELL<br>MARKET</div>
<div class="btn" style="left:10px;top:79px;width:70px;height:35px;background:#f0fff0;padding-top:11.0px">BUY ASK</div>
<div class="btn" style="left:90px;top:79px;width:70px;height:35px;background:#fff0f5;padding-top:11.0px">SELL ASK</div>
<div class="btn" style="left:10px;top:125px;width:70px;height:35px;background:#f0fff0;padding-top:11.0px">BUY BID</div>
<div class="btn" style="left:90px;top:125px;width:70px;height:35px;background:#fff0f5;padding-top:11.0px">SELL BID</div>
<div class="btn" style="left:10px;top:170px;width:70px;height:35px;background:#faebd7;padding-top:11.0px">REV</div>
<div class="btn" style="left:90px;top:170px;width:70px;height:35px;background:#faebd7;padding-top:11.0px">CLOSE</div>
<div class="btn" style="left:142px;top:2px;width:24px;height:21px;background:linear-gradient(#fff,#f0efe6)"></div>
<div class="abs" style="left:148px;top:9px;width:0;height:0;border-left:5px solid transparent;border-right:5px solid transparent;border-bottom:5px solid #000"></div>
<div class="abs" style="left:9px;top:217px;width:152px;height:23px;background:#faebd7;border:1px solid #000;box-sizing:border-box"></div>
<div class="abs" style="left:85px;top:217px;width:1px;height:23px;background:#000"></div>
<div class="lbl" style="left:9px;top:222px;width:76px;text-align:center">FLAT</div>
<div class="lbl" style="left:86px;top:222px;width:75px;text-align:center">ENTRY</div>
<div class="abs" style="left:9px;top:239px;width:152px;height:23px;background:#000"></div>
<div class="lbl" style="left:9px;top:244px;width:152px;text-align:center;color:#fff;font-weight:bold">PnL</div>
<div class="lbl" style="left:13px;top:273px;width:80px;text-align:center">Account</div>
<div class="lbl" style="left:105px;top:273px;width:46px;text-align:center">Qty</div>
<div class="abs" style="left:9px;top:292px;width:90px;height:19px;background:#ece9d8;border:1px solid #c9c7ba;box-sizing:border-box"></div>
<div class="lbl" style="left:13px;top:295px;color:#aca899">Replay101</div>
<div class="abs" style="left:81px;top:294px;width:16px;height:15px;background:#ece9d8;border:1px solid #d8d5c6;border-radius:2px;box-sizing:border-box"></div>
<svg class="abs" style="left:85px;top:299px" width="9" height="6"><path d="M1 1L4.5 4.5L8 1" stroke="#c0bdae" stroke-width="1.8" fill="none"/></svg>
<div class="abs" style="left:105px;top:292px;width:55px;height:18px;background:#fff;border:1px solid #7f9db9;box-sizing:border-box"></div>
<div class="lbl" style="left:108px;top:294px">1</div>
<div class="abs" style="left:144px;top:294px;width:15px;height:15px;background:linear-gradient(#dbe6fd,#b9cdf8);border:1px solid #b4c8f6;border-radius:2px;box-sizing:border-box"></div>
<svg class="abs" style="left:147px;top:296px" width="9" height="12"><path d="M1 4.5L4.5 1.5L8 4.5M1 7.5L4.5 10.5L8 7.5" stroke="#4d6185" stroke-width="1.7" fill="none"/></svg>
<div class="lbl" style="left:13px;top:325px;width:85px;text-align:center">ATM Strategy</div>
<div class="btn" style="left:132px;top:323px;width:28px;height:17px;background:linear-gradient(#fff,#ece9dc);box-shadow:inset 0 0 0 1px #bcd0f4">...</div>
<div class="abs" style="left:9px;top:343px;width:151px;height:18px;background:#fff;border:1px solid #7f9db9;box-sizing:border-box"></div>
<div class="lbl" style="left:13px;top:346px">&lt;Custom&gt;</div>
<div class="abs" style="left:143px;top:345px;width:16px;height:15px;background:linear-gradient(#d4e0fc,#b4c8f6);border:1px solid #b4c8f6;border-radius:2px;box-sizing:border-box"></div>
<svg class="abs" style="left:147px;top:350px" width="9" height="6"><path d="M1 1L4.5 4.5L8 1" stroke="#4d6185" stroke-width="1.8" fill="none"/></svg>
<div class="lbl" style="left:30px;top:374px">A: 1198,25</div><div class="lbl" style="left:109px;top:374px">6</div>
<div class="lbl" style="left:30px;top:395px">B: 1197,75</div><div class="lbl" style="left:109px;top:395px">5</div>
</div>
<div class="abs sb" style="top:476px;width:1110px">
<div class="sbt" style="left:0px;width:15px"></div>
<svg class="abs" style="left:3.5px;top:7px" width="8" height="10"><path d="M6 1L2 5L6 9" stroke="#4d6185" stroke-width="2" fill="none"/></svg>
<div class="sbt" style="left:946px;width:146px"></div>
<div class="abs" style="left:1016px;top:8px;width:8px;height:8px;background:repeating-linear-gradient(90deg,#eef4fe 0 1px,#8cb0f8 1px 2px)"></div>
<div class="sbt" style="left:1094px;width:15px"></div>
<svg class="abs" style="left:1097.5px;top:7px" width="8" height="10"><path d="M2 1L6 5L2 9" stroke="#4d6185" stroke-width="2" fill="none"/></svg>
</div>
<div class="abs" style="left:0;top:499px;width:1273px;height:4px;background:linear-gradient(#2a60e8 0%,#0838d0 35%,#0024b0 100%)"></div>
<div class="abs tb" style="top:503px">
<div class="abs" style="left:0px;top:4px;width:3px;height:15px;background:repeating-linear-gradient(#b8b5a2 0 2px,transparent 2px 4px)"></div>
<div class="sep" style="left:9px"></div>
<span style="left:16px">NQ 12-08</span><div class="dd" style="left:68px"></div>
<span style="left:82px">20 Range</span><div class="dd" style="left:134px"></div>
<div class="sep" style="left:148px"></div>
<svg class="abs" style="left:151px;top:1px" width="22" height="20" viewBox="0 0 22 20">
<rect x="1" y="4" width="4" height="13.5" rx="1.3" fill="#000"/><rect x="2.1" y="6" width="1.8" height="9.5" fill="#00f000"/>
<rect x="7" y="2" width="4" height="13.5" rx="1.3" fill="#000"/><rect x="8.1" y="4" width="1.8" height="9.5" fill="#00f000"/>
<rect x="13" y="5" width="4" height="12.5" rx="1.3" fill="#000"/><rect x="14.1" y="7" width="1.8" height="8.5" fill="#f00000"/></svg>
<div class="dd" style="left:170px"></div>
<svg class="abs" style="left:181px;top:2px" width="18" height="18" viewBox="0 0 18 18">
<path d="M1 16.5L4 10L12 2.5Q15 1 16 3.5L8 12.5Z" fill="#111"/><path d="M5 11L12 4" stroke="#fff" stroke-width="0.8"/></svg>
<div class="dd" style="left:199px"></div>
<svg class="abs" style="left:211px;top:3px" width="16" height="16" viewBox="0 0 16 16">
<circle cx="6" cy="6" r="4.6" fill="#e8f4ff" stroke="#6a8ab0" stroke-width="1.3"/><path d="M3.5 6H8.5M6 3.5V8.5" stroke="#3a8a2a" stroke-width="1.4"/>
<path d="M9.5 9.5L14 14" stroke="#d88a30" stroke-width="2.4" stroke-linecap="round"/></svg>
<svg class="abs" style="left:234px;top:3px" width="16" height="16" viewBox="0 0 16 16">
<circle cx="6" cy="6" r="4.6" fill="#e4e4dc" stroke="#b0b0a8" stroke-width="1.3"/><path d="M3.5 6H8.5" stroke="#b8b8b0" stroke-width="1.4"/>
<path d="M9.5 9.5L14 14" stroke="#b0b0a8" stroke-width="2.4" stroke-linecap="round"/></svg>
<div class="sep" style="left:258px"></div>
<svg class="abs" style="left:262px;top:1px" width="20" height="20" viewBox="0 0 20 20" shape-rendering="crispEdges">
<path d="M0 9.5H7M12 9.5H19M9.5 1V7M9.5 12V18" stroke="#000" stroke-width="2"/><rect x="9" y="9" width="1" height="1" fill="#000"/></svg>
<div class="dd" style="left:282px"></div>
<svg class="abs" style="left:293px;top:3px" width="16" height="16" viewBox="0 0 16 16">
<rect x="0.5" y="1.5" width="14" height="13" fill="#fff" stroke="#5a7ab8"/><rect x="0.5" y="1.5" width="14" height="3" fill="#7a9ad8" stroke="#5a7ab8"/>
<circle cx="7" cy="8.5" r="3.2" fill="#dcecff" stroke="#4a6a98" stroke-width="1.2"/><path d="M9.5 11L13 14" stroke="#d88a30" stroke-width="2"/></svg>
<div class="sep" style="left:316px"></div>
<svg class="abs" style="left:320px;top:2px" width="18" height="18" viewBox="0 0 18 18">
<path d="M3 5L12 1.5L16 5L8 9Z" fill="#3aa83a" stroke="#1a6a1a" stroke-width="0.8"/>
<path d="M2 8L11 5L15 9L7 12.5Z" fill="#58c858" stroke="#1a6a1a" stroke-width="0.8"/>
<circle cx="6" cy="13" r="3.2" fill="#f0b020" stroke="#a87010" stroke-width="0.8"/><circle cx="11.5" cy="13.5" r="2.6" fill="#f8c840" stroke="#a87010" stroke-width="0.8"/></svg>
<svg class="abs" style="left:345px;top:3px" width="16" height="16" viewBox="0 0 16 16">
<rect x="0.5" y="0.5" width="14" height="14" fill="#fff" stroke="#3a5a98"/>
<path d="M0.5 5.5H14.5M0.5 10.5H14.5M5.5 0.5V14.5M10.5 0.5V14.5" stroke="#a8c0e8" stroke-width="1"/>
<path d="M1.5 11L5 6.5L8 9L13.5 2.5" stroke="#1a8a3a" stroke-width="1.8" fill="none"/>
<path d="M1.5 13L6 10L9 12L13.5 7" stroke="#2a4ab8" stroke-width="1.2" fill="none"/></svg>
<svg class="abs" style="left:367px;top:3px" width="16" height="16" viewBox="0 0 16 16">
<circle cx="8" cy="8" r="7" fill="#f0a818" stroke="#b87808"/><text x="8" y="12" text-anchor="middle" font-family='"Liberation Sans", sans-serif' font-weight="bold" font-size="11" fill="#fff">S</text></svg>
<svg class="abs" style="left:391px;top:3px" width="16" height="16" viewBox="0 0 16 16" shape-rendering="crispEdges">
<rect x="0.5" y="1.5" width="14" height="12" fill="#fff" stroke="#4a6aa8"/><rect x="1" y="2" width="13" height="3" fill="#6a8ad0"/>
<path d="M3 7.5H6M8 7.5H12M3 9.5H6M8 9.5H12M3 11.5H6M8 11.5H12" stroke="#555"/></svg>
</div>
<svg class="abs" style="left:0;top:527px" width="1273" height="394" viewBox="0 527 1273 394" shape-rendering="crispEdges">
<path d="M10.5 533V895M62.5 533V895M114.5 533V895M166.5 533V895M218.5 533V895M270.5 533V895M322.5 533V895M374.5 533V895M426.5 533V895M478.5 533V895M530.5 533V895M582.5 533V895M634.5 533V895M686.5 533V895M738.5 533V895M820.5 533V895M872.5 533V895M924.5 533V895M976.5 533V895M1028.5 533V895M1080.5 533V895M1132.5 533V895M1184.5 533V895M2 552.5H1212M2 634.5H1212M2 716.5H1212M2 798.5H1212M2 880.5H1212" stroke="#f1eee2" fill="none"/>
<path d="M754.5 531V895M764.5 531V895" stroke="#b4b4b4"/>
<path d="M588.5 531V895" stroke="#000"/>
<path d="M2 894.5H1213M1212.5 531V895" stroke="#000"/>
<path d="M10.5 895V901M62.5 895V901M114.5 895V901M166.5 895V901M218.5 895V901M270.5 895V901M322.5 895V901M374.5 895V901M426.5 895V901M478.5 895V901M530.5 895V901M582.5 895V901M634.5 895V901M686.5 895V901M738.5 895V901M820.5 895V901M872.5 895V901M924.5 895V901M976.5 895V901M1028.5 895V901M1080.5 895V901M1132.5 895V901M1184.5 895V901M764.5 895V901M1213 552.5H1218M1213 580.5H1218M1213 607.5H1218M1213 634.5H1218M1213 662.5H1218M1213 689.5H1218M1213 716.5H1218M1213 744.5H1218M1213 771.5H1218M1213 798.5H1218M1213 826.5H1218M1213 853.5H1218M1213 880.5H1218" stroke="#000"/>
<g shape-rendering="auto" fill="none"><path d="M746 686.5L926 688" stroke="#ff8c00" stroke-width="1.2"/></g>
<path d="M10.5 783V797" stroke="#000"/>
<rect x="8.5" y="785.5" width="4" height="12" fill="#90ee90" stroke="#000"/>
<rect x="11.5" y="785.5" width="4" height="12" fill="#ff0000" stroke="#000"/>
<path d="M16.5 775V803" stroke="#000"/>
<rect x="14.5" y="783.5" width="4" height="14" fill="#90ee90" stroke="#000"/>
<rect x="17.5" y="783.5" width="4" height="10" fill="#ff0000" stroke="#000"/>
<rect x="20.5" y="778.5" width="4" height="15" fill="#90ee90" stroke="#000"/>
<path d="M25.5 775V798" stroke="#000"/>
<rect x="23.5" y="778.5" width="4" height="20" fill="#ff0000" stroke="#000"/>
<rect x="26.5" y="798.5" width="4" height="15" fill="#ff0000" stroke="#000"/>
<path d="M31.5 793V813" stroke="#000"/>
<rect x="29.5" y="799.5" width="4" height="14" fill="#90ee90" stroke="#000"/>
<path d="M34.5 799V822" stroke="#000"/>
<rect x="32.5" y="799.5" width="4" height="20" fill="#ff0000" stroke="#000"/>
<path d="M37.5 797V819" stroke="#000"/>
<rect x="35.5" y="799.5" width="4" height="20" fill="#90ee90" stroke="#000"/>
<rect x="38.5" y="784.5" width="4" height="15" fill="#90ee90" stroke="#000"/>
<rect x="41.5" y="784.5" width="4" height="17" fill="#ff0000" stroke="#000"/>
<rect x="44.5" y="781.5" width="4" height="20" fill="#90ee90" stroke="#000"/>
<path d="M49.5 777V795" stroke="#000"/>
<rect x="47.5" y="781.5" width="4" height="14" fill="#ff0000" stroke="#000"/>
<path d="M52.5 778V795" stroke="#000"/>
<rect x="50.5" y="781.5" width="4" height="14" fill="#90ee90" stroke="#000"/>
<path d="M55.5 776V796" stroke="#000"/>
<rect x="53.5" y="781.5" width="4" height="15" fill="#ff0000" stroke="#000"/>
<rect x="56.5" y="776.5" width="4" height="20" fill="#90ee90" stroke="#000"/>
<rect x="59.5" y="776.5" width="4" height="12" fill="#ff0000" stroke="#000"/>
<rect x="62.5" y="770.5" width="4" height="18" fill="#90ee90" stroke="#000"/>
<path d="M67.5 757V775" stroke="#000"/>
<rect x="65.5" y="757.5" width="4" height="13" fill="#90ee90" stroke="#000"/>
<path d="M70.5 744V761" stroke="#000"/>
<rect x="68.5" y="744.5" width="4" height="13" fill="#90ee90" stroke="#000"/>
<path d="M73.5 728V744" stroke="#000"/>
<rect x="71.5" y="735.5" width="4" height="9" fill="#90ee90" stroke="#000"/>
<path d="M76.5 731V744" stroke="#000"/>
<rect x="74.5" y="735.5" width="4" height="9" fill="#ff0000" stroke="#000"/>
<rect x="77.5" y="731.5" width="4" height="13" fill="#90ee90" stroke="#000"/>
<path d="M82.5 731V757" stroke="#000"/>
<rect x="80.5" y="731.5" width="4" height="20" fill="#ff0000" stroke="#000"/>
<path d="M85.5 737V758" stroke="#000"/>
<rect x="83.5" y="737.5" width="4" height="14" fill="#90ee90" stroke="#000"/>
<path d="M88.5 723V751" stroke="#000"/>
<rect x="86.5" y="737.5" width="4" height="14" fill="#ff0000" stroke="#000"/>
<rect x="89.5" y="731.5" width="4" height="20" fill="#90ee90" stroke="#000"/>
<rect x="92.5" y="731.5" width="4" height="20" fill="#ff0000" stroke="#000"/>
<rect x="95.5" y="751.5" width="4" height="18" fill="#ff0000" stroke="#000"/>
<path d="M100.5 754V775" stroke="#000"/>
<rect x="98.5" y="754.5" width="4" height="15" fill="#90ee90" stroke="#000"/>
<rect x="101.5" y="754.5" width="4" height="13" fill="#ff0000" stroke="#000"/>
<path d="M106.5 754V769" stroke="#000"/>
<rect x="104.5" y="754.5" width="4" height="13" fill="#90ee90" stroke="#000"/>
<path d="M109.5 754V782" stroke="#000"/>
<rect x="107.5" y="754.5" width="4" height="20" fill="#ff0000" stroke="#000"/>
<rect x="110.5" y="754.5" width="4" height="20" fill="#90ee90" stroke="#000"/>
<path d="M115.5 749V778" stroke="#000"/>
<rect x="113.5" y="754.5" width="4" height="20" fill="#ff0000" stroke="#000"/>
<rect x="116.5" y="754.5" width="4" height="20" fill="#90ee90" stroke="#000"/>
<rect x="119.5" y="754.5" width="4" height="15" fill="#ff0000" stroke="#000"/>
<rect x="122.5" y="755.5" width="4" height="14" fill="#90ee90" stroke="#000"/>
<path d="M127.5 755V777" stroke="#000"/>
<rect x="125.5" y="755.5" width="4" height="20" fill="#ff0000" stroke="#000"/>
<rect x="128.5" y="755.5" width="4" height="20" fill="#90ee90" stroke="#000"/>
<path d="M133.5 736V755" stroke="#000"/>
<rect x="131.5" y="740.5" width="4" height="15" fill="#90ee90" stroke="#000"/>
<rect x="134.5" y="740.5" width="4" height="14" fill="#ff0000" stroke="#000"/>
<rect x="137.5" y="734.5" width="4" height="20" fill="#90ee90" stroke="#000"/>
<rect x="140.5" y="720.5" width="4" height="14" fill="#90ee90" stroke="#000"/>
<rect x="143.5" y="720.5" width="4" height="20" fill="#ff0000" stroke="#000"/>
<path d="M148.5 727V748" stroke="#000"/>
<rect x="146.5" y="727.5" width="4" height="13" fill="#90ee90" stroke="#000"/>
<path d="M151.5 715V731" stroke="#000"/>
<rect x="149.5" y="715.5" width="4" height="12" fill="#90ee90" stroke="#000"/>
<rect x="152.5" y="700.5" width="4" height="15" fill="#90ee90" stroke="#000"/>
<rect x="155.5" y="700.5" width="4" height="20" fill="#ff0000" stroke="#000"/>
<path d="M160.5 704V725" stroke="#000"/>
<rect x="158.5" y="710.5" width="4" height="10" fill="#90ee90" stroke="#000"/>
<rect x="161.5" y="695.5" width="4" height="15" fill="#90ee90" stroke="#000"/>
<rect x="164.5" y="683.5" width="4" height="12" fill="#90ee90" stroke="#000"/>
<rect x="167.5" y="683.5" width="4" height="14" fill="#ff0000" stroke="#000"/>
<path d="M172.5 680V699" stroke="#000"/>
<rect x="170.5" y="680.5" width="4" height="17" fill="#90ee90" stroke="#000"/>
<path d="M175.5 665V680" stroke="#000"/>
<rect x="173.5" y="669.5" width="4" height="11" fill="#90ee90" stroke="#000"/>
<path d="M178.5 653V682" stroke="#000"/>
<rect x="176.5" y="669.5" width="4" height="13" fill="#ff0000" stroke="#000"/>
<path d="M181.5 657V682" stroke="#000"/>
<rect x="179.5" y="662.5" width="4" height="20" fill="#90ee90" stroke="#000"/>
<path d="M184.5 662V686" stroke="#000"/>
<rect x="182.5" y="662.5" width="4" height="20" fill="#ff0000" stroke="#000"/>
<rect x="185.5" y="667.5" width="4" height="15" fill="#90ee90" stroke="#000"/>
<rect x="188.5" y="667.5" width="4" height="20" fill="#ff0000" stroke="#000"/>
<rect x="191.5" y="687.5" width="4" height="11" fill="#ff0000" stroke="#000"/>
<path d="M196.5 692V712" stroke="#000"/>
<rect x="194.5" y="698.5" width="4" height="14" fill="#ff0000" stroke="#000"/>
<path d="M199.5 699V715" stroke="#000"/>
<rect x="197.5" y="699.5" width="4" height="13" fill="#90ee90" stroke="#000"/>
<path d="M202.5 699V720" stroke="#000"/>
<rect x="200.5" y="699.5" width="4" height="20" fill="#ff0000" stroke="#000"/>
<rect x="203.5" y="699.5" width="4" height="20" fill="#90ee90" stroke="#000"/>
<rect x="206.5" y="699.5" width="4" height="17" fill="#ff0000" stroke="#000"/>
<rect x="209.5" y="716.5" width="4" height="10" fill="#ff0000" stroke="#000"/>
<rect x="212.5" y="726.5" width="4" height="12" fill="#ff0000" stroke="#000"/>
<rect x="215.5" y="718.5" width="4" height="20" fill="#90ee90" stroke="#000"/>
<rect x="218.5" y="718.5" width="4" height="11" fill="#ff0000" stroke="#000"/>
<path d="M223.5 718V731" stroke="#000"/>
<rect x="221.5" y="718.5" width="4" height="11" fill="#90ee90" stroke="#000"/>
<path d="M226.5 716V738" stroke="#000"/>
<rect x="224.5" y="718.5" width="4" height="20" fill="#ff0000" stroke="#000"/>
<path d="M229.5 729V752" stroke="#000"/>
<rect x="227.5" y="729.5" width="4" height="9" fill="#90ee90" stroke="#000"/>
<path d="M232.5 729V747" stroke="#000"/>
<rect x="230.5" y="729.5" width="4" height="12" fill="#ff0000" stroke="#000"/>
<path d="M235.5 721V752" stroke="#000"/>
<rect x="233.5" y="721.5" width="4" height="20" fill="#90ee90" stroke="#000"/>
<rect x="236.5" y="721.5" width="4" height="14" fill="#ff0000" stroke="#000"/>
<path d="M241.5 715V735" stroke="#000"/>
<rect x="239.5" y="720.5" width="4" height="15" fill="#90ee90" stroke="#000"/>
<path d="M244.5 715V737" stroke="#000"/>
<rect x="242.5" y="720.5" width="4" height="17" fill="#ff0000" stroke="#000"/>
<rect x="245.5" y="722.5" width="4" height="15" fill="#90ee90" stroke="#000"/>
<path d="M250.5 712V742" stroke="#000"/>
<rect x="248.5" y="722.5" width="4" height="20" fill="#ff0000" stroke="#000"/>
<path d="M253.5 737V751" stroke="#000"/>
<rect x="251.5" y="742.5" width="4" height="9" fill="#ff0000" stroke="#000"/>
<rect x="254.5" y="737.5" width="4" height="14" fill="#90ee90" stroke="#000"/>
<rect x="257.5" y="737.5" width="4" height="20" fill="#ff0000" stroke="#000"/>
<rect x="260.5" y="740.5" width="4" height="17" fill="#90ee90" stroke="#000"/>
<path d="M265.5 735V754" stroke="#000"/>
<rect x="263.5" y="740.5" width="4" height="14" fill="#ff0000" stroke="#000"/>
<rect x="266.5" y="735.5" width="4" height="19" fill="#90ee90" stroke="#000"/>
<rect x="269.5" y="735.5" width="4" height="15" fill="#ff0000" stroke="#000"/>
<rect x="272.5" y="730.5" width="4" height="20" fill="#90ee90" stroke="#000"/>
<path d="M277.5 730V748" stroke="#000"/>
<rect x="275.5" y="730.5" width="4" height="12" fill="#ff0000" stroke="#000"/>
<path d="M280.5 714V742" stroke="#000"/>
<rect x="278.5" y="722.5" width="4" height="20" fill="#90ee90" stroke="#000"/>
<rect x="281.5" y="722.5" width="4" height="15" fill="#ff0000" stroke="#000"/>
<rect x="284.5" y="722.5" width="4" height="15" fill="#90ee90" stroke="#000"/>
<path d="M289.5 722V741" stroke="#000"/>
<rect x="287.5" y="722.5" width="4" height="18" fill="#ff0000" stroke="#000"/>
<path d="M292.5 717V740" stroke="#000"/>
<rect x="290.5" y="720.5" width="4" height="20" fill="#90ee90" stroke="#000"/>
<rect x="293.5" y="720.5" width="4" height="9" fill="#ff0000" stroke="#000"/>
<rect x="296.5" y="716.5" width="4" height="13" fill="#90ee90" stroke="#000"/>
<rect x="299.5" y="701.5" width="4" height="15" fill="#90ee90" stroke="#000"/>
<rect x="302.5" y="701.5" width="4" height="9" fill="#ff0000" stroke="#000"/>
<rect x="305.5" y="690.5" width="4" height="20" fill="#90ee90" stroke="#000"/>
<rect x="308.5" y="690.5" width="4" height="11" fill="#ff0000" stroke="#000"/>
<rect x="311.5" y="681.5" width="4" height="20" fill="#90ee90" stroke="#000"/>
<path d="M316.5 678V698" stroke="#000"/>
<rect x="314.5" y="681.5" width="4" height="17" fill="#ff0000" stroke="#000"/>
<path d="M319.5 682V698" stroke="#000"/>
<rect x="317.5" y="686.5" width="4" height="12" fill="#90ee90" stroke="#000"/>
<path d="M322.5 686V712" stroke="#000"/>
<rect x="320.5" y="686.5" width="4" height="20" fill="#ff0000" stroke="#000"/>
<path d="M325.5 700V716" stroke="#000"/>
<rect x="323.5" y="706.5" width="4" height="10" fill="#ff0000" stroke="#000"/>
<rect x="326.5" y="696.5" width="4" height="20" fill="#90ee90" stroke="#000"/>
<path d="M331.5 670V696" stroke="#000"/>
<rect x="329.5" y="676.5" width="4" height="20" fill="#90ee90" stroke="#000"/>
<path d="M334.5 659V676" stroke="#000"/>
<rect x="332.5" y="661.5" width="4" height="15" fill="#90ee90" stroke="#000"/>
<rect x="335.5" y="661.5" width="4" height="20" fill="#ff0000" stroke="#000"/>
<path d="M340.5 658V681" stroke="#000"/>
<rect x="338.5" y="661.5" width="4" height="20" fill="#90ee90" stroke="#000"/>
<path d="M343.5 661V679" stroke="#000"/>
<rect x="341.5" y="661.5" width="4" height="12" fill="#ff0000" stroke="#000"/>
<path d="M346.5 640V673" stroke="#000"/>
<rect x="344.5" y="653.5" width="4" height="20" fill="#90ee90" stroke="#000"/>
<path d="M349.5 653V667" stroke="#000"/>
<rect x="347.5" y="653.5" width="4" height="10" fill="#ff0000" stroke="#000"/>
<path d="M352.5 643V669" stroke="#000"/>
<rect x="350.5" y="643.5" width="4" height="20" fill="#90ee90" stroke="#000"/>
<rect x="353.5" y="630.5" width="4" height="13" fill="#90ee90" stroke="#000"/>
<rect x="356.5" y="618.5" width="4" height="12" fill="#90ee90" stroke="#000"/>
<path d="M361.5 617V642" stroke="#000"/>
<rect x="359.5" y="618.5" width="4" height="20" fill="#ff0000" stroke="#000"/>
<rect x="362.5" y="622.5" width="4" height="16" fill="#90ee90" stroke="#000"/>
<rect x="365.5" y="622.5" width="4" height="20" fill="#ff0000" stroke="#000"/>
<rect x="368.5" y="642.5" width="4" height="12" fill="#ff0000" stroke="#000"/>
<path d="M373.5 637V654" stroke="#000"/>
<rect x="371.5" y="643.5" width="4" height="11" fill="#90ee90" stroke="#000"/>
<rect x="374.5" y="643.5" width="4" height="20" fill="#ff0000" stroke="#000"/>
<rect x="377.5" y="651.5" width="4" height="12" fill="#90ee90" stroke="#000"/>
<path d="M382.5 648V666" stroke="#000"/>
<rect x="380.5" y="651.5" width="4" height="15" fill="#ff0000" stroke="#000"/>
<rect x="383.5" y="646.5" width="4" height="20" fill="#90ee90" stroke="#000"/>
<path d="M388.5 631V650" stroke="#000"/>
<rect x="386.5" y="631.5" width="4" height="15" fill="#90ee90" stroke="#000"/>
<path d="M391.5 631V651" stroke="#000"/>
<rect x="389.5" y="631.5" width="4" height="17" fill="#ff0000" stroke="#000"/>
<path d="M394.5 624V648" stroke="#000"/>
<rect x="392.5" y="628.5" width="4" height="20" fill="#90ee90" stroke="#000"/>
<rect x="395.5" y="628.5" width="4" height="20" fill="#ff0000" stroke="#000"/>
<path d="M400.5 645V660" stroke="#000"/>
<rect x="398.5" y="648.5" width="4" height="12" fill="#ff0000" stroke="#000"/>
<path d="M403.5 660V679" stroke="#000"/>
<rect x="401.5" y="660.5" width="4" height="14" fill="#ff0000" stroke="#000"/>
<rect x="404.5" y="674.5" width="4" height="13" fill="#ff0000" stroke="#000"/>
<path d="M409.5 673V693" stroke="#000"/>
<rect x="407.5" y="673.5" width="4" height="14" fill="#90ee90" stroke="#000"/>
<path d="M412.5 670V693" stroke="#000"/>
<rect x="410.5" y="673.5" width="4" height="20" fill="#ff0000" stroke="#000"/>
<path d="M415.5 673V693" stroke="#000"/>
<rect x="413.5" y="679.5" width="4" height="14" fill="#90ee90" stroke="#000"/>
<rect x="416.5" y="679.5" width="4" height="20" fill="#ff0000" stroke="#000"/>
<rect x="419.5" y="687.5" width="4" height="12" fill="#90ee90" stroke="#000"/>
<rect x="422.5" y="687.5" width="4" height="20" fill="#ff0000" stroke="#000"/>
<path d="M427.5 685V707" stroke="#000"/>
<rect x="425.5" y="688.5" width="4" height="19" fill="#90ee90" stroke="#000"/>
<rect x="428.5" y="679.5" width="4" height="9" fill="#90ee90" stroke="#000"/>
<path d="M433.5 676V691" stroke="#000"/>
<rect x="431.5" y="679.5" width="4" height="12" fill="#ff0000" stroke="#000"/>
<rect x="434.5" y="671.5" width="4" height="20" fill="#90ee90" stroke="#000"/>
<rect x="437.5" y="671.5" width="4" height="15" fill="#ff0000" stroke="#000"/>
<path d="M442.5 675V694" stroke="#000"/>
<rect x="440.5" y="675.5" width="4" height="11" fill="#90ee90" stroke="#000"/>
<path d="M445.5 672V684" stroke="#000"/>
<rect x="443.5" y="675.5" width="4" height="9" fill="#ff0000" stroke="#000"/>
<path d="M448.5 662V684" stroke="#000"/>
<rect x="446.5" y="664.5" width="4" height="20" fill="#90ee90" stroke="#000"/>
<rect x="449.5" y="647.5" width="4" height="17" fill="#90ee90" stroke="#000"/>
<rect x="452.5" y="647.5" width="4" height="14" fill="#ff0000" stroke="#000"/>
<rect x="455.5" y="661.5" width="4" height="12" fill="#ff0000" stroke="#000"/>
<path d="M460.5 673V690" stroke="#000"/>
<rect x="458.5" y="673.5" width="4" height="15" fill="#ff0000" stroke="#000"/>
<path d="M463.5 685V700" stroke="#000"/>
<rect x="461.5" y="688.5" width="4" height="12" fill="#ff0000" stroke="#000"/>
<rect x="464.5" y="688.5" width="4" height="12" fill="#90ee90" stroke="#000"/>
<path d="M469.5 688V712" stroke="#000"/>
<rect x="467.5" y="688.5" width="4" height="20" fill="#ff0000" stroke="#000"/>
<path d="M472.5 708V723" stroke="#000"/>
<rect x="470.5" y="708.5" width="4" height="13" fill="#ff0000" stroke="#000"/>
<path d="M475.5 707V731" stroke="#000"/>
<rect x="473.5" y="707.5" width="4" height="14" fill="#90ee90" stroke="#000"/>
<path d="M478.5 705V726" stroke="#000"/>
<rect x="476.5" y="707.5" width="4" height="19" fill="#ff0000" stroke="#000"/>
<path d="M481.5 701V726" stroke="#000"/>
<rect x="479.5" y="706.5" width="4" height="20" fill="#90ee90" stroke="#000"/>
<rect x="482.5" y="706.5" width="4" height="20" fill="#ff0000" stroke="#000"/>
<rect x="485.5" y="726.5" width="4" height="12" fill="#ff0000" stroke="#000"/>
<path d="M490.5 724V742" stroke="#000"/>
<rect x="488.5" y="724.5" width="4" height="14" fill="#90ee90" stroke="#000"/>
<rect x="491.5" y="724.5" width="4" height="14" fill="#ff0000" stroke="#000"/>
<path d="M496.5 718V744" stroke="#000"/>
<rect x="494.5" y="718.5" width="4" height="20" fill="#90ee90" stroke="#000"/>
<path d="M499.5 695V718" stroke="#000"/>
<rect x="497.5" y="708.5" width="4" height="10" fill="#90ee90" stroke="#000"/>
<rect x="500.5" y="708.5" width="4" height="14" fill="#ff0000" stroke="#000"/>
<path d="M505.5 706V722" stroke="#000"/>
<rect x="503.5" y="710.5" width="4" height="12" fill="#90ee90" stroke="#000"/>
<rect x="506.5" y="699.5" width="4" height="11" fill="#90ee90" stroke="#000"/>
<path d="M511.5 690V713" stroke="#000"/>
<rect x="509.5" y="699.5" width="4" height="14" fill="#ff0000" stroke="#000"/>
<path d="M514.5 697V713" stroke="#000"/>
<rect x="512.5" y="701.5" width="4" height="12" fill="#90ee90" stroke="#000"/>
<rect x="515.5" y="701.5" width="4" height="20" fill="#ff0000" stroke="#000"/>
<rect x="518.5" y="709.5" width="4" height="12" fill="#90ee90" stroke="#000"/>
<path d="M523.5 706V731" stroke="#000"/>
<rect x="521.5" y="709.5" width="4" height="10" fill="#ff0000" stroke="#000"/>
<path d="M526.5 699V721" stroke="#000"/>
<rect x="524.5" y="699.5" width="4" height="20" fill="#90ee90" stroke="#000"/>
<rect x="527.5" y="679.5" width="4" height="20" fill="#90ee90" stroke="#000"/>
<path d="M532.5 679V694" stroke="#000"/>
<rect x="530.5" y="679.5" width="4" height="11" fill="#ff0000" stroke="#000"/>
<path d="M535.5 664V693" stroke="#000"/>
<rect x="533.5" y="670.5" width="4" height="20" fill="#90ee90" stroke="#000"/>
<rect x="536.5" y="670.5" width="4" height="20" fill="#ff0000" stroke="#000"/>
<rect x="539.5" y="670.5" width="4" height="20" fill="#90ee90" stroke="#000"/>
<rect x="542.5" y="670.5" width="4" height="13" fill="#ff0000" stroke="#000"/>
<rect x="545.5" y="673.5" width="4" height="10" fill="#90ee90" stroke="#000"/>
<rect x="548.5" y="673.5" width="4" height="20" fill="#ff0000" stroke="#000"/>
<path d="M553.5 689V714" stroke="#000"/>
<rect x="551.5" y="693.5" width="4" height="14" fill="#ff0000" stroke="#000"/>
<path d="M556.5 682V707" stroke="#000"/>
<rect x="554.5" y="687.5" width="4" height="20" fill="#90ee90" stroke="#000"/>
<rect x="557.5" y="672.5" width="4" height="15" fill="#90ee90" stroke="#000"/>
<rect x="560.5" y="672.5" width="4" height="10" fill="#ff0000" stroke="#000"/>
<rect x="563.5" y="662.5" width="4" height="20" fill="#90ee90" stroke="#000"/>
<path d="M568.5 662V681" stroke="#000"/>
<rect x="566.5" y="662.5" width="4" height="12" fill="#ff0000" stroke="#000"/>
<rect x="569.5" y="654.5" width="4" height="20" fill="#90ee90" stroke="#000"/>
<path d="M574.5 640V654" stroke="#000"/>
<rect x="572.5" y="645.5" width="4" height="9" fill="#90ee90" stroke="#000"/>
<rect x="575.5" y="632.5" width="4" height="13" fill="#90ee90" stroke="#000"/>
<rect x="578.5" y="618.5" width="4" height="14" fill="#90ee90" stroke="#000"/>
<path d="M583.5 605V630" stroke="#000"/>
<rect x="581.5" y="618.5" width="4" height="12" fill="#ff0000" stroke="#000"/>
<path d="M586.5 605V630" stroke="#000"/>
<rect x="584.5" y="610.5" width="4" height="20" fill="#90ee90" stroke="#000"/>
<path d="M589.5 606V632" stroke="#000"/>
<rect x="587.5" y="610.5" width="4" height="20" fill="#ff0000" stroke="#000"/>
<path d="M592.5 624V642" stroke="#000"/>
<rect x="590.5" y="630.5" width="4" height="12" fill="#ff0000" stroke="#000"/>
<rect x="593.5" y="642.5" width="4" height="13" fill="#ff0000" stroke="#000"/>
<path d="M598.5 639V658" stroke="#000"/>
<rect x="596.5" y="639.5" width="4" height="16" fill="#90ee90" stroke="#000"/>
<rect x="599.5" y="639.5" width="4" height="13" fill="#ff0000" stroke="#000"/>
<path d="M604.5 628V652" stroke="#000"/>
<rect x="602.5" y="632.5" width="4" height="20" fill="#90ee90" stroke="#000"/>
<rect x="605.5" y="632.5" width="4" height="12" fill="#ff0000" stroke="#000"/>
<rect x="608.5" y="624.5" width="4" height="20" fill="#90ee90" stroke="#000"/>
<path d="M613.5 611V634" stroke="#000"/>
<rect x="611.5" y="624.5" width="4" height="10" fill="#ff0000" stroke="#000"/>
<rect x="614.5" y="634.5" width="4" height="14" fill="#ff0000" stroke="#000"/>
<path d="M619.5 642V661" stroke="#000"/>
<rect x="617.5" y="648.5" width="4" height="13" fill="#ff0000" stroke="#000"/>
<path d="M622.5 635V661" stroke="#000"/>
<rect x="620.5" y="641.5" width="4" height="20" fill="#90ee90" stroke="#000"/>
<rect x="623.5" y="641.5" width="4" height="19" fill="#ff0000" stroke="#000"/>
<rect x="626.5" y="660.5" width="4" height="14" fill="#ff0000" stroke="#000"/>
<path d="M631.5 659V684" stroke="#000"/>
<rect x="629.5" y="659.5" width="4" height="15" fill="#90ee90" stroke="#000"/>
<rect x="632.5" y="645.5" width="4" height="14" fill="#90ee90" stroke="#000"/>
<rect x="635.5" y="634.5" width="4" height="11" fill="#90ee90" stroke="#000"/>
<path d="M640.5 630V652" stroke="#000"/>
<rect x="638.5" y="634.5" width="4" height="18" fill="#ff0000" stroke="#000"/>
<path d="M643.5 637V652" stroke="#000"/>
<rect x="641.5" y="641.5" width="4" height="11" fill="#90ee90" stroke="#000"/>
<rect x="644.5" y="641.5" width="4" height="12" fill="#ff0000" stroke="#000"/>
<path d="M649.5 628V653" stroke="#000"/>
<rect x="647.5" y="633.5" width="4" height="20" fill="#90ee90" stroke="#000"/>
<path d="M652.5 632V653" stroke="#000"/>
<rect x="650.5" y="633.5" width="4" height="20" fill="#ff0000" stroke="#000"/>
<rect x="653.5" y="641.5" width="4" height="12" fill="#90ee90" stroke="#000"/>
<path d="M658.5 641V659" stroke="#000"/>
<rect x="656.5" y="641.5" width="4" height="16" fill="#ff0000" stroke="#000"/>
<path d="M661.5 640V657" stroke="#000"/>
<rect x="659.5" y="644.5" width="4" height="13" fill="#90ee90" stroke="#000"/>
<path d="M664.5 642V664" stroke="#000"/>
<rect x="662.5" y="644.5" width="4" height="20" fill="#ff0000" stroke="#000"/>
<path d="M667.5 661V678" stroke="#000"/>
<rect x="665.5" y="664.5" width="4" height="10" fill="#ff0000" stroke="#000"/>
<rect x="668.5" y="654.5" width="4" height="20" fill="#90ee90" stroke="#000"/>
<rect x="671.5" y="654.5" width="4" height="15" fill="#ff0000" stroke="#000"/>
<path d="M676.5 654V672" stroke="#000"/>
<rect x="674.5" y="654.5" width="4" height="15" fill="#90ee90" stroke="#000"/>
<rect x="677.5" y="654.5" width="4" height="20" fill="#ff0000" stroke="#000"/>
<path d="M682.5 674V692" stroke="#000"/>
<rect x="680.5" y="674.5" width="4" height="10" fill="#ff0000" stroke="#000"/>
<rect x="683.5" y="664.5" width="4" height="20" fill="#90ee90" stroke="#000"/>
<rect x="686.5" y="664.5" width="4" height="20" fill="#ff0000" stroke="#000"/>
<rect x="689.5" y="664.5" width="4" height="20" fill="#90ee90" stroke="#000"/>
<rect x="692.5" y="664.5" width="4" height="10" fill="#ff0000" stroke="#000"/>
<path d="M697.5 651V674" stroke="#000"/>
<rect x="695.5" y="657.5" width="4" height="17" fill="#90ee90" stroke="#000"/>
<rect x="698.5" y="657.5" width="4" height="20" fill="#ff0000" stroke="#000"/>
<rect x="701.5" y="657.5" width="4" height="20" fill="#90ee90" stroke="#000"/>
<rect x="704.5" y="640.5" width="4" height="17" fill="#90ee90" stroke="#000"/>
<path d="M709.5 625V644" stroke="#000"/>
<rect x="707.5" y="630.5" width="4" height="10" fill="#90ee90" stroke="#000"/>
<rect x="710.5" y="630.5" width="4" height="20" fill="#ff0000" stroke="#000"/>
<rect x="713.5" y="650.5" width="4" height="16" fill="#ff0000" stroke="#000"/>
<rect x="716.5" y="666.5" width="4" height="20" fill="#ff0000" stroke="#000"/>
<rect x="719.5" y="686.5" width="4" height="20" fill="#ff0000" stroke="#000"/>
<rect x="722.5" y="706.5" width="4" height="20" fill="#ff0000" stroke="#000"/>
<rect x="725.5" y="726.5" width="4" height="13" fill="#ff0000" stroke="#000"/>
<rect x="728.5" y="719.5" width="4" height="20" fill="#90ee90" stroke="#000"/>
<rect x="731.5" y="719.5" width="4" height="10" fill="#ff0000" stroke="#000"/>
<path d="M736.5 712V734" stroke="#000"/>
<rect x="734.5" y="712.5" width="4" height="17" fill="#90ee90" stroke="#000"/>
<path d="M739.5 695V712" stroke="#000"/>
<rect x="737.5" y="700.5" width="4" height="12" fill="#90ee90" stroke="#000"/>
<rect x="740.5" y="700.5" width="4" height="10" fill="#ff0000" stroke="#000"/>
<path d="M745.5 688V710" stroke="#000"/>
<rect x="743.5" y="690.5" width="4" height="20" fill="#90ee90" stroke="#000"/>
<rect x="746.5" y="690.5" width="4" height="12" fill="#ff0000" stroke="#000"/>
<rect x="749.5" y="690.5" width="4" height="12" fill="#90ee90" stroke="#000"/>
<path d="M754.5 690V726" stroke="#000"/>
<rect x="752.5" y="690.5" width="4" height="20" fill="#ff0000" stroke="#000"/>
<rect x="755.5" y="710.5" width="4" height="10" fill="#ff0000" stroke="#000"/>
<rect x="758.5" y="702.5" width="4" height="18" fill="#90ee90" stroke="#000"/>
<rect x="761.5" y="702.5" width="4" height="20" fill="#ff0000" stroke="#000"/>
<path d="M766.5 697V722" stroke="#000"/>
<rect x="764.5" y="702.5" width="4" height="20" fill="#90ee90" stroke="#000"/>
<rect x="767.5" y="702.5" width="4" height="20" fill="#ff0000" stroke="#000"/>
<rect x="770.5" y="710.5" width="4" height="12" fill="#90ee90" stroke="#000"/>
<path d="M775.5 706V727" stroke="#000"/>
<rect x="773.5" y="710.5" width="4" height="14" fill="#ff0000" stroke="#000"/>
<path d="M778.5 709V724" stroke="#000"/>
<rect x="776.5" y="712.5" width="4" height="12" fill="#90ee90" stroke="#000"/>
<path d="M781.5 712V736" stroke="#000"/>
<rect x="779.5" y="712.5" width="4" height="20" fill="#ff0000" stroke="#000"/>
<rect x="782.5" y="732.5" width="4" height="15" fill="#ff0000" stroke="#000"/>
<rect x="785.5" y="736.5" width="4" height="11" fill="#90ee90" stroke="#000"/>
<rect x="788.5" y="736.5" width="4" height="20" fill="#ff0000" stroke="#000"/>
<path d="M793.5 736V764" stroke="#000"/>
<rect x="791.5" y="736.5" width="4" height="20" fill="#90ee90" stroke="#000"/>
<path d="M796.5 721V736" stroke="#000"/>
<rect x="794.5" y="726.5" width="4" height="10" fill="#90ee90" stroke="#000"/>
<rect x="797.5" y="726.5" width="4" height="14" fill="#ff0000" stroke="#000"/>
<path d="M802.5 717V740" stroke="#000"/>
<rect x="800.5" y="720.5" width="4" height="20" fill="#90ee90" stroke="#000"/>
<path d="M805.5 710V736" stroke="#000"/>
<rect x="803.5" y="720.5" width="4" height="12" fill="#ff0000" stroke="#000"/>
<path d="M808.5 716V732" stroke="#000"/>
<rect x="806.5" y="718.5" width="4" height="14" fill="#90ee90" stroke="#000"/>
<rect x="809.5" y="703.5" width="4" height="15" fill="#90ee90" stroke="#000"/>
<path d="M814.5 681V703" stroke="#000"/>
<rect x="812.5" y="690.5" width="4" height="13" fill="#90ee90" stroke="#000"/>
<path d="M817.5 687V703" stroke="#000"/>
<rect x="815.5" y="690.5" width="4" height="13" fill="#ff0000" stroke="#000"/>
<rect x="818.5" y="703.5" width="4" height="12" fill="#ff0000" stroke="#000"/>
<path d="M823.5 702V721" stroke="#000"/>
<rect x="821.5" y="702.5" width="4" height="13" fill="#90ee90" stroke="#000"/>
<rect x="824.5" y="702.5" width="4" height="20" fill="#ff0000" stroke="#000"/>
<path d="M829.5 713V735" stroke="#000"/>
<rect x="827.5" y="713.5" width="4" height="9" fill="#90ee90" stroke="#000"/>
<path d="M832.5 713V724" stroke="#000"/>
<rect x="830.5" y="713.5" width="4" height="9" fill="#ff0000" stroke="#000"/>
<path d="M835.5 705V732" stroke="#000"/>
<rect x="833.5" y="705.5" width="4" height="17" fill="#90ee90" stroke="#000"/>
<path d="M838.5 700V724" stroke="#000"/>
<rect x="836.5" y="705.5" width="4" height="14" fill="#ff0000" stroke="#000"/>
<rect x="839.5" y="704.5" width="4" height="15" fill="#90ee90" stroke="#000"/>
<path d="M844.5 704V727" stroke="#000"/>
<rect x="842.5" y="704.5" width="4" height="15" fill="#ff0000" stroke="#000"/>
<path d="M847.5 694V719" stroke="#000"/>
<rect x="845.5" y="699.5" width="4" height="20" fill="#90ee90" stroke="#000"/>
<path d="M850.5 679V703" stroke="#000"/>
<rect x="848.5" y="679.5" width="4" height="20" fill="#90ee90" stroke="#000"/>
<path d="M853.5 673V689" stroke="#000"/>
<rect x="851.5" y="679.5" width="4" height="10" fill="#ff0000" stroke="#000"/>
<rect x="854.5" y="679.5" width="4" height="10" fill="#90ee90" stroke="#000"/>
<rect x="857.5" y="679.5" width="4" height="20" fill="#ff0000" stroke="#000"/>
<path d="M862.5 684V705" stroke="#000"/>
<rect x="860.5" y="684.5" width="4" height="15" fill="#90ee90" stroke="#000"/>
<path d="M865.5 684V710" stroke="#000"/>
<rect x="863.5" y="684.5" width="4" height="15" fill="#ff0000" stroke="#000"/>
<path d="M868.5 675V699" stroke="#000"/>
<rect x="866.5" y="679.5" width="4" height="20" fill="#90ee90" stroke="#000"/>
<rect x="869.5" y="667.5" width="4" height="12" fill="#90ee90" stroke="#000"/>
<path d="M874.5 661V682" stroke="#000"/>
<rect x="872.5" y="667.5" width="4" height="15" fill="#ff0000" stroke="#000"/>
<rect x="875.5" y="662.5" width="4" height="20" fill="#90ee90" stroke="#000"/>
<rect x="878.5" y="650.5" width="4" height="12" fill="#90ee90" stroke="#000"/>
<rect x="881.5" y="650.5" width="4" height="11" fill="#ff0000" stroke="#000"/>
<path d="M886.5 638V661" stroke="#000"/>
<rect x="884.5" y="641.5" width="4" height="20" fill="#90ee90" stroke="#000"/>
<path d="M889.5 641V673" stroke="#000"/>
<rect x="887.5" y="641.5" width="4" height="20" fill="#ff0000" stroke="#000"/>
<path d="M892.5 635V661" stroke="#000"/>
<rect x="890.5" y="641.5" width="4" height="20" fill="#90ee90" stroke="#000"/>
<rect x="893.5" y="629.5" width="4" height="12" fill="#90ee90" stroke="#000"/>
<path d="M898.5 620V642" stroke="#000"/>
<rect x="896.5" y="629.5" width="4" height="13" fill="#ff0000" stroke="#000"/>
<rect x="899.5" y="622.5" width="4" height="20" fill="#90ee90" stroke="#000"/>
<path d="M904.5 611V634" stroke="#000"/>
<rect x="902.5" y="622.5" width="4" height="12" fill="#ff0000" stroke="#000"/>
<path d="M907.5 631V644" stroke="#000"/>
<rect x="905.5" y="634.5" width="4" height="10" fill="#ff0000" stroke="#000"/>
<rect x="908.5" y="628.5" width="4" height="16" fill="#90ee90" stroke="#000"/>
<path d="M913.5 622V648" stroke="#000"/>
<rect x="911.5" y="628.5" width="4" height="20" fill="#ff0000" stroke="#000"/>
<rect x="914.5" y="648.5" width="4" height="13" fill="#ff0000" stroke="#000"/>
<rect x="917.5" y="661.5" width="4" height="17" fill="#ff0000" stroke="#000"/>
<rect x="920.5" y="678.5" width="4" height="14" fill="#ff0000" stroke="#000"/>
<path d="M925.5 672V695" stroke="#000"/>
<rect x="923.5" y="672.5" width="4" height="20" fill="#90ee90" stroke="#000"/>
<rect x="926.5" y="672.5" width="4" height="16" fill="#ff0000" stroke="#000"/>
<path d="M931.5 666V688" stroke="#000"/>
<rect x="929.5" y="668.5" width="4" height="20" fill="#90ee90" stroke="#000"/>
<path d="M934.5 665V681" stroke="#000"/>
<rect x="932.5" y="668.5" width="4" height="13" fill="#ff0000" stroke="#000"/>
<path d="M937.5 681V704" stroke="#000"/>
<rect x="935.5" y="681.5" width="4" height="17" fill="#ff0000" stroke="#000"/>
<rect x="938.5" y="686.5" width="4" height="12" fill="#90ee90" stroke="#000"/>
<rect x="941.5" y="686.5" width="4" height="20" fill="#ff0000" stroke="#000"/>
<rect x="944.5" y="693.5" width="4" height="13" fill="#90ee90" stroke="#000"/>
<rect x="947.5" y="683.5" width="4" height="10" fill="#90ee90" stroke="#000"/>
<rect x="950.5" y="673.5" width="4" height="10" fill="#90ee90" stroke="#000"/>
<rect x="953.5" y="659.5" width="4" height="14" fill="#90ee90" stroke="#000"/>
<rect x="956.5" y="659.5" width="4" height="20" fill="#ff0000" stroke="#000"/>
<path d="M961.5 666V683" stroke="#000"/>
<rect x="959.5" y="670.5" width="4" height="9" fill="#90ee90" stroke="#000"/>
<path d="M964.5 670V696" stroke="#000"/>
<rect x="962.5" y="670.5" width="4" height="20" fill="#ff0000" stroke="#000"/>
<path d="M967.5 688V706" stroke="#000"/>
<rect x="965.5" y="690.5" width="4" height="14" fill="#ff0000" stroke="#000"/>
<rect x="968.5" y="684.5" width="4" height="20" fill="#90ee90" stroke="#000"/>
<rect x="971.5" y="672.5" width="4" height="12" fill="#90ee90" stroke="#000"/>
<path d="M976.5 667V692" stroke="#000"/>
<rect x="974.5" y="672.5" width="4" height="20" fill="#ff0000" stroke="#000"/>
<rect x="977.5" y="682.5" width="4" height="10" fill="#90ee90" stroke="#000"/>
<path d="M2 623.5H1212M2 642.5H1212M2 663.5H1212M2 694.5H1212M2 758.5H1212" stroke="#0000e0"/>
<path d="M2 720H1212" stroke="#000"/><path d="M2 721.5H1212" stroke="#0000e0"/>
<rect x="979.5" y="693.5" width="4" height="3" fill="#add8e6" stroke="#000"/>
<g shape-rendering="auto">
<path d="M910.4 644L915.6 651H912.6V662H908.1999999999999V651H905.1999999999999Z" fill="#00f000" stroke="#1a5a1a" stroke-width="0.6"/>
<path d="M924.3 688L929.5 695H926.5V705.5H922.0999999999999V695H919.0999999999999Z" fill="#00f000" stroke="#1a5a1a" stroke-width="0.6"/>
<path d="M956.3 656.5L961.5 649.5H958.5V637.5H954.0999999999999V649.5H951.0999999999999Z" fill="#ee0000" stroke="#5a1a1a" stroke-width="0.6"/>
<path d="M1183.5 537.5V554.5L1197.5 546Z" fill="#fff" stroke="#222"/><rect x="1199.5" y="536.5" width="3" height="19" fill="#fff" stroke="#222"/>
</g>
<g font-family='"Liberation Sans", sans-serif' font-size="11" fill="#000" shape-rendering="auto">
<text x="1219.5" y="556.9" font-size="10.7">1250,00</text>
<text x="1219.5" y="584.9" font-size="10.7">1240,00</text>
<text x="1219.5" y="611.9" font-size="10.7">1230,00</text>
<text x="1219.5" y="638.9" font-size="10.7">1220,00</text>
<text x="1219.5" y="666.9" font-size="10.7">1210,00</text>
<text x="1219.5" y="693.9" font-size="10.7">1200,00</text>
<text x="1219.5" y="720.9" font-size="10.7">1190,00</text>
<text x="1219.5" y="748.9" font-size="10.7">1180,00</text>
<text x="1219.5" y="775.9" font-size="10.7">1170,00</text>
<text x="1219.5" y="802.9" font-size="10.7">1160,00</text>
<text x="1219.5" y="830.9" font-size="10.7">1150,00</text>
<text x="1219.5" y="857.9" font-size="10.7">1140,00</text>
<text x="1219.5" y="884.9" font-size="10.7">1130,00</text>
<g shape-rendering="auto"><path d="M1213.5 694L1217.5 687.5H1262V700.5H1217.5Z" fill="#000"/></g>
<g shape-rendering="auto"><path d="M1213.5 721L1217.5 714.5H1269.5V727.5H1217.5Z" fill="#d3d3d3" stroke="#000"/></g>
<text x="1221.5" y="698" fill="#fff">1108,00</text>
<text x="1221.5" y="725">1188,75</text>
<text x="1" y="909.5">5.30</text>
<text x="61.5" y="909.5" text-anchor="middle">15.35</text>
<text x="113.5" y="909.5" text-anchor="middle">15.41</text>
<text x="165.5" y="909.5" text-anchor="middle">15.57</text>
<text x="217.5" y="909.5" text-anchor="middle">16.09</text>
<text x="269.5" y="909.5" text-anchor="middle">16.29</text>
<text x="321.5" y="909.5" text-anchor="middle">17.12</text>
<text x="373.5" y="909.5" text-anchor="middle">17.56</text>
<text x="425.5" y="909.5" text-anchor="middle">18.47</text>
<text x="477.5" y="909.5" text-anchor="middle">19.55</text>
<text x="529.5" y="909.5" text-anchor="middle">20.34</text>
<text x="581.5" y="909.5" text-anchor="middle">21.03</text>
<text x="633.5" y="909.5" text-anchor="middle">21.22</text>
<text x="685.5" y="909.5" text-anchor="middle">21.41</text>
<text x="819.5" y="909.5" text-anchor="middle">16.23</text>
<text x="871.5" y="909.5" text-anchor="middle">17.44</text>
<text x="923.5" y="909.5" text-anchor="middle">19.35</text>
<text x="975.5" y="909.5" text-anchor="middle">20.36</text>
<text x="1027.5" y="909.5" text-anchor="middle">20.46</text>
<text x="1079.5" y="909.5" text-anchor="middle">20.54</text>
<text x="1131.5" y="909.5" text-anchor="middle">21.03</text>
<text x="1183.5" y="909.5" text-anchor="middle">21.12</text>
<text x="763.5" y="909.5" text-anchor="middle">10/27</text>
<rect x="573" y="899" width="31" height="12" fill="#d3d3d3"/>
<text x="574" y="909.5">21.03</text>
<text x="3" y="891.5">© 2008 NinjaTrader, LLC</text>
</g></svg>
<div class="abs sb" style="top:919px;width:1273px">
<div class="sbt" style="left:0px;width:12px"></div>
<svg class="abs" style="left:2.0px;top:7px" width="8" height="10"><path d="M6 1L2 5L6 9" stroke="#4d6185" stroke-width="2" fill="none"/></svg>
<div class="sbt" style="left:224px;width:1032px"></div>
<div class="abs" style="left:736px;top:8px;width:8px;height:8px;background:repeating-linear-gradient(90deg,#eef4fe 0 1px,#8cb0f8 1px 2px)"></div>
<div class="sbt" style="left:1258px;width:15px"></div>
<svg class="abs" style="left:1261.5px;top:7px" width="8" height="10"><path d="M2 1L6 5L2 9" stroke="#4d6185" stroke-width="2" fill="none"/></svg>
</div>
</body></html>
